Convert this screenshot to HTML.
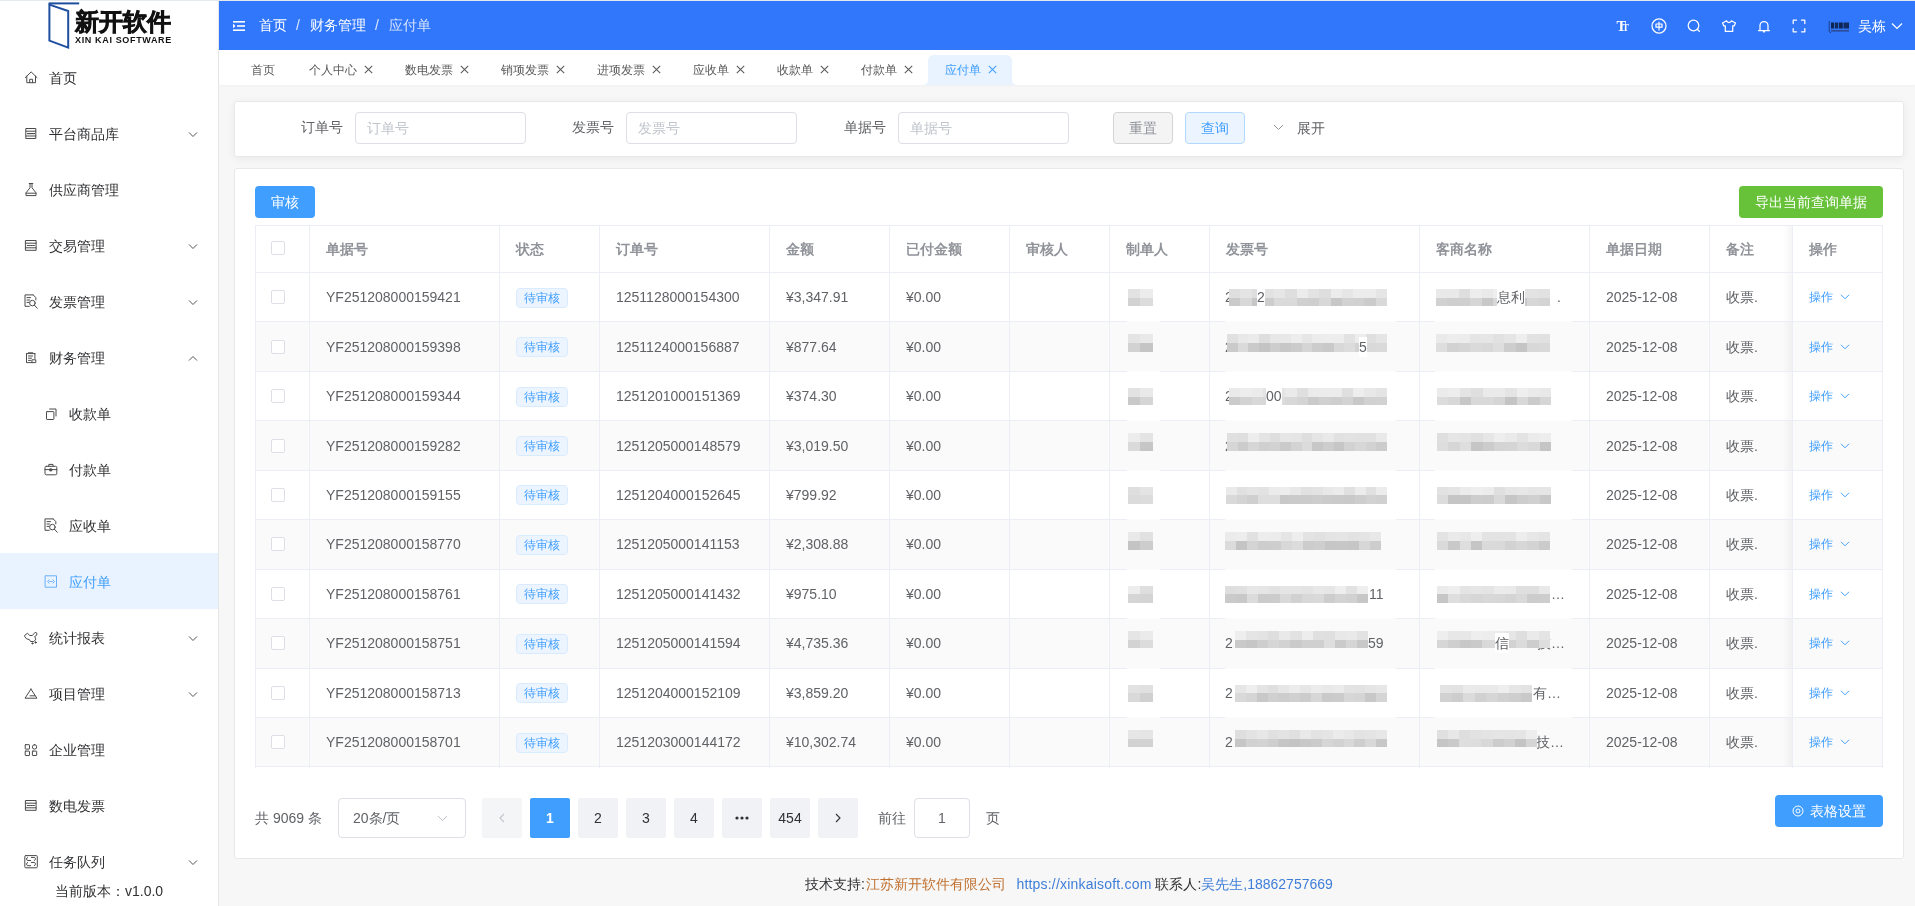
<!DOCTYPE html>
<html><head><meta charset="utf-8"><style>
*{box-sizing:border-box;margin:0;padding:0}
html,body{width:1915px;height:906px;overflow:hidden;background:#f7f7f7;font-family:"Liberation Sans",sans-serif;color:#303133}
.a{position:absolute}
.nw{white-space:nowrap}
#topline{left:0;top:0;width:1915px;height:1px;background:#e4e9ee}
#side{left:0;top:1px;width:219px;height:905px;background:#fff;border-right:1px solid #e6e6e6}
#hdr{left:219px;top:1px;width:1696px;height:49px;background:#3177fb;color:#fff}
#tabs{left:219px;top:50px;width:1696px;height:35px;background:#fff;box-shadow:0 1px 2px rgba(0,0,0,.03)}
.card{background:#fff;border:1px solid #e8e8e8;border-radius:3px}
#search{left:234px;top:101px;width:1670px;height:56px;box-shadow:0 2px 10px rgba(0,0,0,.06)}
#tcard{left:234px;top:168px;width:1670px;height:691px}
.mi{position:absolute;left:0;width:218px;height:56px;font-size:14px;color:#303133;line-height:56px}
.mi .t{position:absolute;left:48.5px;top:1px}
.mi.sub .t{left:68.5px}
.mi svg{position:absolute}
.chev{position:absolute;left:188px;top:25.5px}
.bc{position:absolute;top:0;line-height:49px;font-size:14px;color:#fff}
.tab{position:absolute;top:55px;height:30px;line-height:30px;font-size:12px;color:#555}
.lbl{position:absolute;font-size:14px;color:#606266;line-height:32px;top:111px}
.inp{position:absolute;top:112px;width:171px;height:32px;border:1px solid #dcdfe6;border-radius:4px;font-size:14px;color:#c0c4cc;line-height:30px;padding-left:11px}
.btn{position:absolute;border-radius:4px;font-size:14px;text-align:center;font-weight:500}
.th{position:absolute;font-size:14px;font-weight:bold;color:#909399;line-height:20px}
.td{position:absolute;font-size:14px;color:#606266;line-height:20px;white-space:nowrap}
.hl{position:absolute;height:1px;background:#ebeef5}
.vl{position:absolute;width:1px;background:#ebeef5}
.cb{position:absolute;width:14px;height:14px;border:1px solid #dcdfe6;border-radius:2px;background:#fff}
.tag{position:absolute;height:20px;width:52px;border:1px solid #d9ecff;background:#ecf5ff;color:#409eff;border-radius:4px;font-size:12px;line-height:18px;text-align:center}
.op{position:absolute;font-size:12px;color:#409eff;line-height:20px}
.pg{position:absolute;top:798px;width:40px;height:40px;background:#f0f2f5;border-radius:2px;font-size:14px;color:#303133;text-align:center;line-height:40px;font-weight:normal}
.mz{position:absolute}
.mz i{position:absolute;display:block}
#foot{position:absolute;left:805px;top:874px;font-size:14px;line-height:20px;color:#303133;white-space:nowrap}
</style></head><body><div id="root" style="position:absolute;left:0;top:0;width:1915px;height:906px;will-change:transform">
<div id="topline" class="a"></div>
<div id="side" class="a"></div>
<svg class="a" style="left:46px;top:1px" width="36" height="49" viewBox="46 1 36 49" fill="none" stroke="#1e4f9f" stroke-width="2"><path d="M48.6 3.4H79.2"/><path d="M49.4 3.6V40.6L68.2 47.6V11L49.4 4.6"/></svg>
<div class="a nw" style="left:74.5px;top:6.5px;font-size:24px;line-height:30px;font-weight:900;color:#111;letter-spacing:0.2px;-webkit-text-stroke:0.7px #111">新开软件</div>
<div class="a nw" style="left:75px;top:34.5px;font-size:9px;line-height:11px;font-weight:bold;color:#111;letter-spacing:0.65px">XIN KAI SOFTWARE</div>
<div class="mi" style="top:49px;color:#303133">
<svg class="a" style="left:24px;top:20px;color:#4a4a4a" width="16" height="16" viewBox="0 0 16 16" fill="none" stroke="#4a4a4a" stroke-width="1" stroke-linecap="round" stroke-linejoin="round"><path d="M1.3 8.6L7.15 2.9L13 8.6M2.8 7.2V13.7H11.5V7.2M5.7 13.7V10.3H8.6V13.7"/></svg>
<span class="t">首页</span>
</div>
<div class="mi" style="top:105px;color:#303133">
<svg class="a" style="left:24px;top:20px;color:#4a4a4a" width="16" height="16" viewBox="0 0 16 16" fill="none" stroke="#4a4a4a" stroke-width="1" stroke-linecap="round" stroke-linejoin="round"><rect x="2.2" y="3.5" width="9.6" height="10"/><path d="M2.2 6.2H11.8M2.2 11H11.8M3.5 8.6H10.5" /><path d="M3.5 8.6H10.5" stroke-dasharray="1.2 0.8"/></svg>
<span class="t">平台商品库</span>
<svg class="chev" width="10" height="7" viewBox="0 0 10 7" fill="none" stroke="#555" stroke-width="1"><path d="M1 1.5L5 5.5L9 1.5"/></svg>
</div>
<div class="mi" style="top:161px;color:#303133">
<svg class="a" style="left:24px;top:20px;color:#4a4a4a" width="16" height="16" viewBox="0 0 16 16" fill="none" stroke="#4a4a4a" stroke-width="1" stroke-linecap="round" stroke-linejoin="round"><path d="M5.2 2.5H8.8M6 2.5V6.8L2 11.8V14.6H12V11.8L8 6.8V2.5M2 12.2H12"/></svg>
<span class="t">供应商管理</span>
</div>
<div class="mi" style="top:217px;color:#303133">
<svg class="a" style="left:24px;top:20px;color:#4a4a4a" width="16" height="16" viewBox="0 0 16 16" fill="none" stroke="#4a4a4a" stroke-width="1" stroke-linecap="round" stroke-linejoin="round"><rect x="1.8" y="3.5" width="10.3" height="9.8"/><path d="M1.8 6.2H12.1M1.8 10.8H12.1"/><path d="M3.2 8.5H10.7" stroke-dasharray="1.2 0.8"/></svg>
<span class="t">交易管理</span>
<svg class="chev" width="10" height="7" viewBox="0 0 10 7" fill="none" stroke="#555" stroke-width="1"><path d="M1 1.5L5 5.5L9 1.5"/></svg>
</div>
<div class="mi" style="top:273px;color:#303133">
<svg class="a" style="left:24px;top:20px;color:#4a4a4a" width="16" height="16" viewBox="0 0 16 16" fill="none" stroke="#4a4a4a" stroke-width="1" stroke-linecap="round" stroke-linejoin="round"><path d="M9.2 1.9H1V13.3H5.3M9.2 1.9L11.8 4.6V6.8M3 4.6H6.5M3 7H5.5M3 9.4H4.8"/><circle cx="8.4" cy="10.1" r="2.8"/><path d="M10.4 12.2L13.3 15.3"/></svg>
<span class="t">发票管理</span>
<svg class="chev" width="10" height="7" viewBox="0 0 10 7" fill="none" stroke="#555" stroke-width="1"><path d="M1 1.5L5 5.5L9 1.5"/></svg>
</div>
<div class="mi" style="top:329px;color:#303133">
<svg class="a" style="left:24px;top:20px;color:#4a4a4a" width="16" height="16" viewBox="0 0 16 16" fill="none" stroke="#4a4a4a" stroke-width="1" stroke-linecap="round" stroke-linejoin="round"><path d="M4.3 3.8H8.7M2.5 4.6V13.6H8M10.9 4.6V9.5M2.5 4.6H10.9M4.5 7H8.5M4.5 9.2H7.5M4.5 11.4H6.5"/><rect x="8.3" y="10.8" width="3.5" height="2.8"/></svg>
<span class="t">财务管理</span>
<svg class="chev" width="10" height="7" viewBox="0 0 10 7" fill="none" stroke="#555" stroke-width="1"><path d="M1 5.5L5 1.5L9 5.5"/></svg>
</div>
<div class="mi sub" style="top:385px;color:#303133">
<svg class="a" style="left:44px;top:20px;color:#4a4a4a" width="16" height="16" viewBox="0 0 16 16" fill="none" stroke="#4a4a4a" stroke-width="1" stroke-linecap="round" stroke-linejoin="round"><rect x="2.5" y="6.6" width="7.4" height="7.9" rx="0.6"/><path d="M5.6 4H12V11"/></svg>
<span class="t">收款单</span>
</div>
<div class="mi sub" style="top:441px;color:#303133">
<svg class="a" style="left:44px;top:20px;color:#4a4a4a" width="16" height="16" viewBox="0 0 16 16" fill="none" stroke="#4a4a4a" stroke-width="1" stroke-linecap="round" stroke-linejoin="round"><rect x="1" y="5.3" width="11.8" height="8.5" rx="1.3"/><path d="M4.8 5.3V3.4H9V5.3M1 8.6H12.8"/><rect x="6.1" y="7.9" width="1.6" height="2" fill="currentColor"/></svg>
<span class="t">付款单</span>
</div>
<div class="mi sub" style="top:497px;color:#303133">
<svg class="a" style="left:44px;top:20px;color:#4a4a4a" width="16" height="16" viewBox="0 0 16 16" fill="none" stroke="#4a4a4a" stroke-width="1" stroke-linecap="round" stroke-linejoin="round"><path d="M9.2 1.9H1V13.3H5.3M9.2 1.9L11.8 4.6V6.8M3 4.6H6.5M3 7H5.5M3 9.4H4.8"/><circle cx="8.4" cy="10.1" r="2.8"/><path d="M10.4 12.2L13.3 15.3"/></svg>
<span class="t">应收单</span>
</div>
<div class="mi sub" style="top:553px;background:#e8f3ff;color:#409eff">
<svg class="a" style="left:44px;top:20px;color:#6aaef6" width="16" height="16" viewBox="0 0 16 16" fill="none" stroke="#6aaef6" stroke-width="1" stroke-linecap="round" stroke-linejoin="round"><rect x="1.5" y="2.8" width="11" height="11.4"/><path d="M5 6.9L3.6 8.5L5 10.1M9 6.9L10.4 8.5L9 10.1"/><path d="M5.6 8.5H8.4" stroke-dasharray="0.9 0.8"/></svg>
<span class="t">应付单</span>
</div>
<div class="mi" style="top:609px;color:#303133">
<svg class="a" style="left:24px;top:20px;color:#4a4a4a" width="16" height="16" viewBox="0 0 16 16" fill="none" stroke="#4a4a4a" stroke-width="1" stroke-linecap="round" stroke-linejoin="round"><path d="M0.6 6.5L3.4 4.3L4.5 5.1L5.6 6.5H8.4L9.8 4.8L11.2 3.3L13 4.3L12.5 6.4L10.6 7.6L11.6 9.2L11.4 10.9L9.8 12.5H6.5L5.4 10.6L2.6 9.8L1.2 8.1Z"/><circle cx="8.4" cy="14.4" r="0.6" fill="currentColor"/><circle cx="11.6" cy="13.4" r="0.7" fill="currentColor"/></svg>
<span class="t">统计报表</span>
<svg class="chev" width="10" height="7" viewBox="0 0 10 7" fill="none" stroke="#555" stroke-width="1"><path d="M1 1.5L5 5.5L9 1.5"/></svg>
</div>
<div class="mi" style="top:665px;color:#303133">
<svg class="a" style="left:24px;top:20px;color:#4a4a4a" width="16" height="16" viewBox="0 0 16 16" fill="none" stroke="#4a4a4a" stroke-width="1" stroke-linecap="round" stroke-linejoin="round"><path d="M6.95 4.1L12.9 13.2H1L6.95 4.1Z"/><path d="M6 10.8H10.8"/></svg>
<span class="t">项目管理</span>
<svg class="chev" width="10" height="7" viewBox="0 0 10 7" fill="none" stroke="#555" stroke-width="1"><path d="M1 1.5L5 5.5L9 1.5"/></svg>
</div>
<div class="mi" style="top:721px;color:#303133">
<svg class="a" style="left:24px;top:20px;color:#4a4a4a" width="16" height="16" viewBox="0 0 16 16" fill="none" stroke="#4a4a4a" stroke-width="1" stroke-linecap="round" stroke-linejoin="round"><rect x="1.2" y="3.7" width="4.3" height="4.4" rx="0.5"/><rect x="8.4" y="3.7" width="4.3" height="4.4" rx="2.1"/><rect x="1.2" y="10.1" width="4.3" height="4.4" rx="0.5"/><rect x="8.4" y="10.1" width="4.3" height="4.4" rx="0.5"/></svg>
<span class="t">企业管理</span>
</div>
<div class="mi" style="top:777px;color:#303133">
<svg class="a" style="left:24px;top:20px;color:#4a4a4a" width="16" height="16" viewBox="0 0 16 16" fill="none" stroke="#4a4a4a" stroke-width="1" stroke-linecap="round" stroke-linejoin="round"><rect x="1.8" y="3.5" width="10.3" height="9.8"/><path d="M1.8 6.2H12.1M1.8 10.8H12.1"/><path d="M3.2 8.5H10.7" stroke-dasharray="1.2 0.8"/></svg>
<span class="t">数电发票</span>
</div>
<div class="mi" style="top:833px;color:#303133">
<svg class="a" style="left:24px;top:20px;color:#4a4a4a" width="16" height="16" viewBox="0 0 16 16" fill="none" stroke="#4a4a4a" stroke-width="1" stroke-linecap="round" stroke-linejoin="round"><rect x="0.8" y="2.6" width="12.5" height="12.2" rx="1"/><path d="M3.45 4.3C2.2 4.8 2.2 7.3 3.7 7.5H6.6M7.4 4.45H10.3C11.9 4.6 11.9 7.2 10.3 7.5M3.45 9.4C2.2 9.9 2.2 12.5 3.7 12.7H6.6M7.4 9.45H10.3C11.9 9.6 11.9 12.4 10.3 12.7"/></svg>
<span class="t">任务队列</span>
<svg class="chev" width="10" height="7" viewBox="0 0 10 7" fill="none" stroke="#555" stroke-width="1"><path d="M1 1.5L5 5.5L9 1.5"/></svg>
</div>
<div class="a nw" style="left:55px;top:881px;font-size:14px;line-height:20px;color:#303133">当前版本：v1.0.0</div>
<div id="hdr" class="a">
<svg class="a" style="left:14px;top:19px" width="12" height="12" viewBox="0 0 12 12" fill="#fff"><rect x="0" y="1" width="12" height="1.6"/><rect x="4" y="5.2" width="8" height="1.6"/><rect x="0" y="9.4" width="12" height="1.6"/><path d="M0 3.8L2.6 6L0 8.2Z"/></svg>
<span class="bc" style="left:40px">首页</span>
<span class="bc" style="left:77px;color:#dfe9fe">/</span>
<span class="bc" style="left:91px">财务管理</span>
<span class="bc" style="left:156px;color:#dfe9fe">/</span>
<span class="bc" style="left:170px;color:#d6e3fd">应付单</span>
</div>
<svg class="a" style="left:1615px;top:18px" width="16" height="16" viewBox="0 0 16 16" fill="#fff" font-family="Liberation Serif" font-weight="bold"><text x="1.6" y="13.4" font-size="14.5">T</text><text x="7.6" y="13.4" font-size="9.5">T</text></svg>
<svg class="a" style="left:1651px;top:18px" width="16" height="16" viewBox="0 0 16 16" fill="none" stroke="#fff" stroke-width="1.25" stroke-linecap="round" stroke-linejoin="round" ><circle cx="8" cy="8" r="7"/><rect x="5" y="6" width="6" height="3.2" stroke-width="1.2"/><path d="M8 4V12" stroke-width="1.2"/></svg>
<svg class="a" style="left:1686px;top:18px" width="16" height="16" viewBox="0 0 16 16" fill="none" stroke="#fff" stroke-width="1.25" stroke-linecap="round" stroke-linejoin="round" ><circle cx="7.5" cy="7.5" r="5.3"/><path d="M11.3 11.3L13.3 13.3"/></svg>
<svg class="a" style="left:1721px;top:19px" width="16" height="14" viewBox="0 0 16 14" fill="none" stroke="#fff" stroke-width="1.25" stroke-linecap="round" stroke-linejoin="round" ><path d="M5.6 1.8L1.5 4L2.9 6.9H4.3V12.4H11.7V6.9H13.1L14.5 4L10.4 1.8C10 2.9 9 3.5 8 3.5C7 3.5 6 2.9 5.6 1.8Z"/></svg>
<svg class="a" style="left:1757px;top:19px" width="14" height="14" viewBox="0 0 14 14" fill="none" stroke="#fff" stroke-width="1.25" stroke-linecap="round" stroke-linejoin="round" ><path d="M3 11V6.5A4 4 0 0 1 11 6.5V11M1.5 11.5H12.5M6.5 12.8H7.5"/></svg>
<svg class="a" style="left:1792px;top:19px" width="14" height="14" viewBox="0 0 14 14" fill="none" stroke="#fff" stroke-width="1.25" stroke-linecap="round" stroke-linejoin="round" ><path d="M1.2 4.5V1.2H4.5M9.5 1.2H12.8V4.5M12.8 9.5V12.8H9.5M4.5 12.8H1.2V9.5"/></svg>
<svg class="a" style="left:1828px;top:20px" width="23" height="14" viewBox="0 0 23 14"><path d="M1.2 1V11.5L3 13" fill="none" stroke="#1c3f88" stroke-width="1"/><rect x="3" y="2.5" width="3" height="6" fill="#0f2450"/><rect x="6.8" y="2.5" width="3.2" height="6" fill="#102a5c"/><rect x="10.8" y="2.5" width="4" height="6" fill="#0f2450"/><rect x="15.5" y="2.5" width="5.5" height="6" fill="#132c60"/><rect x="3" y="10" width="18" height="1.6" fill="#2a4d95"/></svg>
<span class="a nw" style="left:1858px;top:16px;font-size:14px;line-height:20px;color:#fff">吴栋</span>
<svg class="a" style="left:1891px;top:22px" width="12" height="8" viewBox="0 0 12 8" fill="none" stroke="#fff" stroke-width="1.2"><path d="M1 1.5L6 6.5L11 1.5"/></svg>
<div id="tabs" class="a"></div>
<svg class="a" style="left:922px;top:55px" width="96" height="30" viewBox="0 0 96 30"><path d="M0 30C4 30 6 28 6 24V6C6 2.5 8.5 0 12 0H84C87.5 0 90 2.5 90 6V24C90 28 92 30 96 30Z" fill="#e8f3ff"/></svg>
<span class="tab nw" style="left:251px;color:#595959">首页</span>
<span class="tab nw" style="left:309px;color:#595959">个人中心</span>
<svg class="a" style="left:364px;top:65px" width="9" height="9" viewBox="0 0 9 9" fill="none" stroke="#595959" stroke-width="1.05"><path d="M0.8 0.8L8.2 8.2M8.2 0.8L0.8 8.2"/></svg>
<span class="tab nw" style="left:405px;color:#595959">数电发票</span>
<svg class="a" style="left:460px;top:65px" width="9" height="9" viewBox="0 0 9 9" fill="none" stroke="#595959" stroke-width="1.05"><path d="M0.8 0.8L8.2 8.2M8.2 0.8L0.8 8.2"/></svg>
<span class="tab nw" style="left:501px;color:#595959">销项发票</span>
<svg class="a" style="left:556px;top:65px" width="9" height="9" viewBox="0 0 9 9" fill="none" stroke="#595959" stroke-width="1.05"><path d="M0.8 0.8L8.2 8.2M8.2 0.8L0.8 8.2"/></svg>
<span class="tab nw" style="left:597px;color:#595959">进项发票</span>
<svg class="a" style="left:652px;top:65px" width="9" height="9" viewBox="0 0 9 9" fill="none" stroke="#595959" stroke-width="1.05"><path d="M0.8 0.8L8.2 8.2M8.2 0.8L0.8 8.2"/></svg>
<span class="tab nw" style="left:693px;color:#595959">应收单</span>
<svg class="a" style="left:736px;top:65px" width="9" height="9" viewBox="0 0 9 9" fill="none" stroke="#595959" stroke-width="1.05"><path d="M0.8 0.8L8.2 8.2M8.2 0.8L0.8 8.2"/></svg>
<span class="tab nw" style="left:777px;color:#595959">收款单</span>
<svg class="a" style="left:820px;top:65px" width="9" height="9" viewBox="0 0 9 9" fill="none" stroke="#595959" stroke-width="1.05"><path d="M0.8 0.8L8.2 8.2M8.2 0.8L0.8 8.2"/></svg>
<span class="tab nw" style="left:861px;color:#595959">付款单</span>
<svg class="a" style="left:904px;top:65px" width="9" height="9" viewBox="0 0 9 9" fill="none" stroke="#595959" stroke-width="1.05"><path d="M0.8 0.8L8.2 8.2M8.2 0.8L0.8 8.2"/></svg>
<span class="tab nw" style="left:945px;color:#409eff">应付单</span>
<svg class="a" style="left:988px;top:65px" width="9" height="9" viewBox="0 0 9 9" fill="none" stroke="#409eff" stroke-width="1.05"><path d="M0.8 0.8L8.2 8.2M8.2 0.8L0.8 8.2"/></svg>
<div id="search" class="a card"></div>
<span class="lbl nw" style="left:301px">订单号</span>
<div class="inp nw" style="left:355px">订单号</div>
<span class="lbl nw" style="left:572px">发票号</span>
<div class="inp nw" style="left:626px">发票号</div>
<span class="lbl nw" style="left:844px">单据号</span>
<div class="inp nw" style="left:898px">单据号</div>
<div class="btn nw" style="left:1113px;top:112px;width:60px;height:32px;line-height:30px;background:#f4f4f5;border:1px solid #d3d4d6;color:#909399">重置</div>
<div class="btn nw" style="left:1185px;top:112px;width:60px;height:32px;line-height:30px;background:#ecf5ff;border:1px solid #b3d8ff;color:#409eff">查询</div>
<svg class="a" style="left:1273px;top:124px" width="11" height="7" viewBox="0 0 11 7" fill="none" stroke="#909399" stroke-width="1"><path d="M1 1L5.5 5.5L10 1"/></svg>
<span class="a nw" style="left:1297px;top:118px;font-size:14px;line-height:20px;color:#606266">展开</span>
<div id="tcard" class="a card"></div>
<div class="btn nw" style="left:255px;top:186px;width:60px;height:32px;line-height:32px;background:#409eff;color:#fff">审核</div>
<div class="btn nw" style="left:1739px;top:186px;width:144px;height:32px;line-height:32px;background:#67c23a;color:#fff">导出当前查询单据</div>
<div class="a" style="left:255.5px;top:321.94px;width:1627.0px;height:49.44px;background:#fafafa"></div>
<div class="a" style="left:255.5px;top:420.82px;width:1627.0px;height:49.44px;background:#fafafa"></div>
<div class="a" style="left:255.5px;top:519.7px;width:1627.0px;height:49.44px;background:#fafafa"></div>
<div class="a" style="left:255.5px;top:618.5799999999999px;width:1627.0px;height:49.44px;background:#fafafa"></div>
<div class="a" style="left:255.5px;top:717.46px;width:1627.0px;height:49.44px;background:#fafafa"></div>
<div class="a" style="left:1782.5px;top:225.5px;width:10px;height:541.5px;background:linear-gradient(to right,rgba(0,0,0,0),rgba(0,0,0,.045))"></div>
<div class="hl" style="left:255.0px;top:225.00px;width:1628.0px"></div>
<div class="hl" style="left:255.0px;top:272.00px;width:1628.0px"></div>
<div class="hl" style="left:255.0px;top:321.44px;width:1628.0px"></div>
<div class="hl" style="left:255.0px;top:370.88px;width:1628.0px"></div>
<div class="hl" style="left:255.0px;top:420.32px;width:1628.0px"></div>
<div class="hl" style="left:255.0px;top:469.76px;width:1628.0px"></div>
<div class="hl" style="left:255.0px;top:519.20px;width:1628.0px"></div>
<div class="hl" style="left:255.0px;top:568.64px;width:1628.0px"></div>
<div class="hl" style="left:255.0px;top:618.08px;width:1628.0px"></div>
<div class="hl" style="left:255.0px;top:667.52px;width:1628.0px"></div>
<div class="hl" style="left:255.0px;top:716.96px;width:1628.0px"></div>
<div class="hl" style="left:255.0px;top:766.40px;width:1628.0px"></div>
<div class="a" style="left:1127px;top:321.44px;width:33px;height:1px;background:#fcfcfc"></div>
<div class="a" style="left:1225px;top:321.44px;width:171px;height:1px;background:#fcfcfc"></div>
<div class="a" style="left:1435px;top:321.44px;width:137px;height:1px;background:#fcfcfc"></div>
<div class="a" style="left:1127px;top:370.88px;width:33px;height:1px;background:#fcfcfc"></div>
<div class="a" style="left:1225px;top:370.88px;width:171px;height:1px;background:#fcfcfc"></div>
<div class="a" style="left:1435px;top:370.88px;width:137px;height:1px;background:#fcfcfc"></div>
<div class="a" style="left:1127px;top:420.32px;width:33px;height:1px;background:#fcfcfc"></div>
<div class="a" style="left:1225px;top:420.32px;width:171px;height:1px;background:#fcfcfc"></div>
<div class="a" style="left:1435px;top:420.32px;width:137px;height:1px;background:#fcfcfc"></div>
<div class="a" style="left:1127px;top:469.76px;width:33px;height:1px;background:#fcfcfc"></div>
<div class="a" style="left:1225px;top:469.76px;width:171px;height:1px;background:#fcfcfc"></div>
<div class="a" style="left:1435px;top:469.76px;width:137px;height:1px;background:#fcfcfc"></div>
<div class="a" style="left:1127px;top:519.20px;width:33px;height:1px;background:#fcfcfc"></div>
<div class="a" style="left:1225px;top:519.20px;width:171px;height:1px;background:#fcfcfc"></div>
<div class="a" style="left:1435px;top:519.20px;width:137px;height:1px;background:#fcfcfc"></div>
<div class="a" style="left:1127px;top:568.64px;width:33px;height:1px;background:#fcfcfc"></div>
<div class="a" style="left:1225px;top:568.64px;width:171px;height:1px;background:#fcfcfc"></div>
<div class="a" style="left:1435px;top:568.64px;width:137px;height:1px;background:#fcfcfc"></div>
<div class="a" style="left:1127px;top:618.08px;width:33px;height:1px;background:#fcfcfc"></div>
<div class="a" style="left:1225px;top:618.08px;width:171px;height:1px;background:#fcfcfc"></div>
<div class="a" style="left:1435px;top:618.08px;width:137px;height:1px;background:#fcfcfc"></div>
<div class="a" style="left:1127px;top:667.52px;width:33px;height:1px;background:#fcfcfc"></div>
<div class="a" style="left:1225px;top:667.52px;width:171px;height:1px;background:#fcfcfc"></div>
<div class="a" style="left:1435px;top:667.52px;width:137px;height:1px;background:#fcfcfc"></div>
<div class="a" style="left:1127px;top:716.96px;width:33px;height:1px;background:#fcfcfc"></div>
<div class="a" style="left:1225px;top:716.96px;width:171px;height:1px;background:#fcfcfc"></div>
<div class="a" style="left:1435px;top:716.96px;width:137px;height:1px;background:#fcfcfc"></div>
<div class="vl" style="left:255.0px;top:225.0px;height:542.5px"></div>
<div class="vl" style="left:309.0px;top:225.0px;height:542.5px"></div>
<div class="vl" style="left:499.0px;top:225.0px;height:542.5px"></div>
<div class="vl" style="left:599.0px;top:225.0px;height:542.5px"></div>
<div class="vl" style="left:769.0px;top:225.0px;height:542.5px"></div>
<div class="vl" style="left:889.0px;top:225.0px;height:542.5px"></div>
<div class="vl" style="left:1009.0px;top:225.0px;height:542.5px"></div>
<div class="vl" style="left:1109.0px;top:225.0px;height:542.5px"></div>
<div class="vl" style="left:1209.0px;top:225.0px;height:542.5px"></div>
<div class="vl" style="left:1419.0px;top:225.0px;height:542.5px"></div>
<div class="vl" style="left:1589.0px;top:225.0px;height:542.5px"></div>
<div class="vl" style="left:1709.0px;top:225.0px;height:542.5px"></div>
<div class="vl" style="left:1792.0px;top:225.0px;height:542.5px"></div>
<div class="vl" style="left:1882.0px;top:225.0px;height:542.5px"></div>
<div class="cb" style="left:271px;top:241px"></div>
<span class="th nw" style="left:326.0px;top:238.5px">单据号</span>
<span class="th nw" style="left:516.0px;top:238.5px">状态</span>
<span class="th nw" style="left:616.0px;top:238.5px">订单号</span>
<span class="th nw" style="left:786.0px;top:238.5px">金额</span>
<span class="th nw" style="left:906.0px;top:238.5px">已付金额</span>
<span class="th nw" style="left:1026.0px;top:238.5px">审核人</span>
<span class="th nw" style="left:1126.0px;top:238.5px">制单人</span>
<span class="th nw" style="left:1226.0px;top:238.5px">发票号</span>
<span class="th nw" style="left:1436.0px;top:238.5px">客商名称</span>
<span class="th nw" style="left:1606.0px;top:238.5px">单据日期</span>
<span class="th nw" style="left:1726.0px;top:238.5px">备注</span>
<span class="th nw" style="left:1809.0px;top:238.5px">操作</span>
<div class="cb" style="left:271px;top:290.22px"></div>
<span class="td" style="left:326px;top:287.22px">YF251208000159421</span>
<div class="tag nw" style="left:516px;top:287.72px">待审核</div>
<span class="td" style="left:616px;top:287.22px">1251128000154300</span>
<span class="td" style="left:786px;top:287.22px">¥3,347.91</span>
<span class="td" style="left:906px;top:287.22px">¥0.00</span>
<span class="td" style="left:1225px;top:287.22px">2</span>
<span class="td" style="left:1557px;top:287.22px">.</span>
<div class="mz" style="left:1127.5px;top:289.02px;width:25.5px;height:17.4px"><i style="left:0.00px;top:0.0px;width:13.05px;height:8.7px;background:rgb(226,226,226)"></i><i style="left:12.75px;top:0.0px;width:13.05px;height:8.7px;background:rgb(236,236,236)"></i><i style="left:0.00px;top:8.7px;width:13.05px;height:8.7px;background:rgb(210,210,210)"></i><i style="left:12.75px;top:8.7px;width:13.05px;height:8.7px;background:rgb(220,220,220)"></i></div>
<div class="mz" style="left:1229px;top:289.02px;width:158px;height:17.4px"><i style="left:0.00px;top:0.0px;width:11.59px;height:8.7px;background:rgb(223,223,223)"></i><i style="left:11.29px;top:0.0px;width:11.59px;height:8.7px;background:rgb(228,228,228)"></i><i style="left:22.57px;top:0.0px;width:11.59px;height:8.7px;background:rgb(222,222,222)"></i><i style="left:33.86px;top:0.0px;width:11.59px;height:8.7px;background:rgb(226,226,226)"></i><i style="left:45.14px;top:0.0px;width:11.59px;height:8.7px;background:rgb(230,230,230)"></i><i style="left:56.43px;top:0.0px;width:11.59px;height:8.7px;background:rgb(222,222,222)"></i><i style="left:67.71px;top:0.0px;width:11.59px;height:8.7px;background:rgb(236,236,236)"></i><i style="left:79.00px;top:0.0px;width:11.59px;height:8.7px;background:rgb(227,227,227)"></i><i style="left:90.29px;top:0.0px;width:11.59px;height:8.7px;background:rgb(222,222,222)"></i><i style="left:101.57px;top:0.0px;width:11.59px;height:8.7px;background:rgb(236,236,236)"></i><i style="left:112.86px;top:0.0px;width:11.59px;height:8.7px;background:rgb(230,230,230)"></i><i style="left:124.14px;top:0.0px;width:11.59px;height:8.7px;background:rgb(236,236,236)"></i><i style="left:135.43px;top:0.0px;width:11.59px;height:8.7px;background:rgb(236,236,236)"></i><i style="left:146.71px;top:0.0px;width:11.59px;height:8.7px;background:rgb(229,229,229)"></i><i style="left:0.00px;top:8.7px;width:11.59px;height:8.7px;background:rgb(202,202,202)"></i><i style="left:11.29px;top:8.7px;width:11.59px;height:8.7px;background:rgb(216,216,216)"></i><i style="left:22.57px;top:8.7px;width:11.59px;height:8.7px;background:rgb(199,199,199)"></i><i style="left:33.86px;top:8.7px;width:11.59px;height:8.7px;background:rgb(205,205,205)"></i><i style="left:45.14px;top:8.7px;width:11.59px;height:8.7px;background:rgb(218,218,218)"></i><i style="left:56.43px;top:8.7px;width:11.59px;height:8.7px;background:rgb(218,218,218)"></i><i style="left:67.71px;top:8.7px;width:11.59px;height:8.7px;background:rgb(208,208,208)"></i><i style="left:79.00px;top:8.7px;width:11.59px;height:8.7px;background:rgb(207,207,207)"></i><i style="left:90.29px;top:8.7px;width:11.59px;height:8.7px;background:rgb(216,216,216)"></i><i style="left:101.57px;top:8.7px;width:11.59px;height:8.7px;background:rgb(199,199,199)"></i><i style="left:112.86px;top:8.7px;width:11.59px;height:8.7px;background:rgb(210,210,210)"></i><i style="left:124.14px;top:8.7px;width:11.59px;height:8.7px;background:rgb(209,209,209)"></i><i style="left:135.43px;top:8.7px;width:11.59px;height:8.7px;background:rgb(203,203,203)"></i><i style="left:146.71px;top:8.7px;width:11.59px;height:8.7px;background:rgb(217,217,217)"></i></div>
<div class="mz" style="left:1436px;top:289.02px;width:114px;height:17.4px"><i style="left:0.00px;top:0.0px;width:11.70px;height:8.7px;background:rgb(233,233,233)"></i><i style="left:11.40px;top:0.0px;width:11.70px;height:8.7px;background:rgb(233,233,233)"></i><i style="left:22.80px;top:0.0px;width:11.70px;height:8.7px;background:rgb(222,222,222)"></i><i style="left:34.20px;top:0.0px;width:11.70px;height:8.7px;background:rgb(237,237,237)"></i><i style="left:45.60px;top:0.0px;width:11.70px;height:8.7px;background:rgb(233,233,233)"></i><i style="left:57.00px;top:0.0px;width:11.70px;height:8.7px;background:rgb(238,238,238)"></i><i style="left:68.40px;top:0.0px;width:11.70px;height:8.7px;background:rgb(235,235,235)"></i><i style="left:79.80px;top:0.0px;width:11.70px;height:8.7px;background:rgb(227,227,227)"></i><i style="left:91.20px;top:0.0px;width:11.70px;height:8.7px;background:rgb(227,227,227)"></i><i style="left:102.60px;top:0.0px;width:11.70px;height:8.7px;background:rgb(225,225,225)"></i><i style="left:0.00px;top:8.7px;width:11.70px;height:8.7px;background:rgb(209,209,209)"></i><i style="left:11.40px;top:8.7px;width:11.70px;height:8.7px;background:rgb(206,206,206)"></i><i style="left:22.80px;top:8.7px;width:11.70px;height:8.7px;background:rgb(207,207,207)"></i><i style="left:34.20px;top:8.7px;width:11.70px;height:8.7px;background:rgb(214,214,214)"></i><i style="left:45.60px;top:8.7px;width:11.70px;height:8.7px;background:rgb(200,200,200)"></i><i style="left:57.00px;top:8.7px;width:11.70px;height:8.7px;background:rgb(216,216,216)"></i><i style="left:68.40px;top:8.7px;width:11.70px;height:8.7px;background:rgb(203,203,203)"></i><i style="left:79.80px;top:8.7px;width:11.70px;height:8.7px;background:rgb(199,199,199)"></i><i style="left:91.20px;top:8.7px;width:11.70px;height:8.7px;background:rgb(215,215,215)"></i><i style="left:102.60px;top:8.7px;width:11.70px;height:8.7px;background:rgb(212,212,212)"></i></div>
<span class="td" style="left:1257px;top:287.22px;background:#fff">2</span>
<span class="td" style="left:1497px;top:287.22px;background:#fff">息利</span>
<span class="td" style="left:1606px;top:287.22px">2025-12-08</span>
<span class="td" style="left:1726px;top:287.22px">收票.</span>
<span class="op nw" style="left:1809px;top:287.22px">操作</span>
<svg class="a" style="left:1840px;top:294.22px" width="10" height="6" viewBox="0 0 10 6" fill="none" stroke="#409eff" stroke-width="1"><path d="M1 0.8L5 4.8L9 0.8"/></svg>
<div class="cb" style="left:271px;top:339.66px"></div>
<span class="td" style="left:326px;top:336.66px">YF251208000159398</span>
<div class="tag nw" style="left:516px;top:337.16px">待审核</div>
<span class="td" style="left:616px;top:336.66px">1251124000156887</span>
<span class="td" style="left:786px;top:336.66px">¥877.64</span>
<span class="td" style="left:906px;top:336.66px">¥0.00</span>
<span class="td" style="left:1225px;top:336.66px">2</span>
<div class="mz" style="left:1127.5px;top:334.46px;width:25.5px;height:17.4px"><i style="left:0.00px;top:0.0px;width:13.05px;height:8.7px;background:rgb(228,228,228)"></i><i style="left:12.75px;top:0.0px;width:13.05px;height:8.7px;background:rgb(233,233,233)"></i><i style="left:0.00px;top:8.7px;width:13.05px;height:8.7px;background:rgb(210,210,210)"></i><i style="left:12.75px;top:8.7px;width:13.05px;height:8.7px;background:rgb(197,197,197)"></i></div>
<div class="mz" style="left:1227px;top:334.46px;width:160px;height:17.4px"><i style="left:0.00px;top:0.0px;width:10.97px;height:8.7px;background:rgb(224,224,224)"></i><i style="left:10.67px;top:0.0px;width:10.97px;height:8.7px;background:rgb(232,232,232)"></i><i style="left:21.33px;top:0.0px;width:10.97px;height:8.7px;background:rgb(235,235,235)"></i><i style="left:32.00px;top:0.0px;width:10.97px;height:8.7px;background:rgb(222,222,222)"></i><i style="left:42.67px;top:0.0px;width:10.97px;height:8.7px;background:rgb(231,231,231)"></i><i style="left:53.33px;top:0.0px;width:10.97px;height:8.7px;background:rgb(232,232,232)"></i><i style="left:64.00px;top:0.0px;width:10.97px;height:8.7px;background:rgb(237,237,237)"></i><i style="left:74.67px;top:0.0px;width:10.97px;height:8.7px;background:rgb(230,230,230)"></i><i style="left:85.33px;top:0.0px;width:10.97px;height:8.7px;background:rgb(236,236,236)"></i><i style="left:96.00px;top:0.0px;width:10.97px;height:8.7px;background:rgb(237,237,237)"></i><i style="left:106.67px;top:0.0px;width:10.97px;height:8.7px;background:rgb(237,237,237)"></i><i style="left:117.33px;top:0.0px;width:10.97px;height:8.7px;background:rgb(226,226,226)"></i><i style="left:128.00px;top:0.0px;width:10.97px;height:8.7px;background:rgb(237,237,237)"></i><i style="left:138.67px;top:0.0px;width:10.97px;height:8.7px;background:rgb(223,223,223)"></i><i style="left:149.33px;top:0.0px;width:10.97px;height:8.7px;background:rgb(229,229,229)"></i><i style="left:0.00px;top:8.7px;width:10.97px;height:8.7px;background:rgb(202,202,202)"></i><i style="left:10.67px;top:8.7px;width:10.97px;height:8.7px;background:rgb(218,218,218)"></i><i style="left:21.33px;top:8.7px;width:10.97px;height:8.7px;background:rgb(202,202,202)"></i><i style="left:32.00px;top:8.7px;width:10.97px;height:8.7px;background:rgb(196,196,196)"></i><i style="left:42.67px;top:8.7px;width:10.97px;height:8.7px;background:rgb(205,205,205)"></i><i style="left:53.33px;top:8.7px;width:10.97px;height:8.7px;background:rgb(199,199,199)"></i><i style="left:64.00px;top:8.7px;width:10.97px;height:8.7px;background:rgb(203,203,203)"></i><i style="left:74.67px;top:8.7px;width:10.97px;height:8.7px;background:rgb(213,213,213)"></i><i style="left:85.33px;top:8.7px;width:10.97px;height:8.7px;background:rgb(204,204,204)"></i><i style="left:96.00px;top:8.7px;width:10.97px;height:8.7px;background:rgb(201,201,201)"></i><i style="left:106.67px;top:8.7px;width:10.97px;height:8.7px;background:rgb(216,216,216)"></i><i style="left:117.33px;top:8.7px;width:10.97px;height:8.7px;background:rgb(220,220,220)"></i><i style="left:128.00px;top:8.7px;width:10.97px;height:8.7px;background:rgb(211,211,211)"></i><i style="left:138.67px;top:8.7px;width:10.97px;height:8.7px;background:rgb(217,217,217)"></i><i style="left:149.33px;top:8.7px;width:10.97px;height:8.7px;background:rgb(218,218,218)"></i></div>
<div class="mz" style="left:1436px;top:334.46px;width:114px;height:17.4px"><i style="left:0.00px;top:0.0px;width:11.70px;height:8.7px;background:rgb(234,234,234)"></i><i style="left:11.40px;top:0.0px;width:11.70px;height:8.7px;background:rgb(237,237,237)"></i><i style="left:22.80px;top:0.0px;width:11.70px;height:8.7px;background:rgb(236,236,236)"></i><i style="left:34.20px;top:0.0px;width:11.70px;height:8.7px;background:rgb(229,229,229)"></i><i style="left:45.60px;top:0.0px;width:11.70px;height:8.7px;background:rgb(230,230,230)"></i><i style="left:57.00px;top:0.0px;width:11.70px;height:8.7px;background:rgb(225,225,225)"></i><i style="left:68.40px;top:0.0px;width:11.70px;height:8.7px;background:rgb(229,229,229)"></i><i style="left:79.80px;top:0.0px;width:11.70px;height:8.7px;background:rgb(238,238,238)"></i><i style="left:91.20px;top:0.0px;width:11.70px;height:8.7px;background:rgb(226,226,226)"></i><i style="left:102.60px;top:0.0px;width:11.70px;height:8.7px;background:rgb(225,225,225)"></i><i style="left:0.00px;top:8.7px;width:11.70px;height:8.7px;background:rgb(222,222,222)"></i><i style="left:11.40px;top:8.7px;width:11.70px;height:8.7px;background:rgb(210,210,210)"></i><i style="left:22.80px;top:8.7px;width:11.70px;height:8.7px;background:rgb(213,213,213)"></i><i style="left:34.20px;top:8.7px;width:11.70px;height:8.7px;background:rgb(218,218,218)"></i><i style="left:45.60px;top:8.7px;width:11.70px;height:8.7px;background:rgb(216,216,216)"></i><i style="left:57.00px;top:8.7px;width:11.70px;height:8.7px;background:rgb(222,222,222)"></i><i style="left:68.40px;top:8.7px;width:11.70px;height:8.7px;background:rgb(205,205,205)"></i><i style="left:79.80px;top:8.7px;width:11.70px;height:8.7px;background:rgb(197,197,197)"></i><i style="left:91.20px;top:8.7px;width:11.70px;height:8.7px;background:rgb(216,216,216)"></i><i style="left:102.60px;top:8.7px;width:11.70px;height:8.7px;background:rgb(217,217,217)"></i></div>
<span class="td" style="left:1359px;top:336.66px;background:#fff">5</span>
<span class="td" style="left:1606px;top:336.66px">2025-12-08</span>
<span class="td" style="left:1726px;top:336.66px">收票.</span>
<span class="op nw" style="left:1809px;top:336.66px">操作</span>
<svg class="a" style="left:1840px;top:343.66px" width="10" height="6" viewBox="0 0 10 6" fill="none" stroke="#409eff" stroke-width="1"><path d="M1 0.8L5 4.8L9 0.8"/></svg>
<div class="cb" style="left:271px;top:389.10px"></div>
<span class="td" style="left:326px;top:386.10px">YF251208000159344</span>
<div class="tag nw" style="left:516px;top:386.60px">待审核</div>
<span class="td" style="left:616px;top:386.10px">1251201000151369</span>
<span class="td" style="left:786px;top:386.10px">¥374.30</span>
<span class="td" style="left:906px;top:386.10px">¥0.00</span>
<span class="td" style="left:1225px;top:386.10px">2</span>
<div class="mz" style="left:1127.5px;top:387.9px;width:25.5px;height:17.4px"><i style="left:0.00px;top:0.0px;width:13.05px;height:8.7px;background:rgb(226,226,226)"></i><i style="left:12.75px;top:0.0px;width:13.05px;height:8.7px;background:rgb(233,233,233)"></i><i style="left:0.00px;top:8.7px;width:13.05px;height:8.7px;background:rgb(201,201,201)"></i><i style="left:12.75px;top:8.7px;width:13.05px;height:8.7px;background:rgb(213,213,213)"></i></div>
<div class="mz" style="left:1229px;top:387.9px;width:158px;height:17.4px"><i style="left:0.00px;top:0.0px;width:11.59px;height:8.7px;background:rgb(234,234,234)"></i><i style="left:11.29px;top:0.0px;width:11.59px;height:8.7px;background:rgb(237,237,237)"></i><i style="left:22.57px;top:0.0px;width:11.59px;height:8.7px;background:rgb(235,235,235)"></i><i style="left:33.86px;top:0.0px;width:11.59px;height:8.7px;background:rgb(228,228,228)"></i><i style="left:45.14px;top:0.0px;width:11.59px;height:8.7px;background:rgb(228,228,228)"></i><i style="left:56.43px;top:0.0px;width:11.59px;height:8.7px;background:rgb(234,234,234)"></i><i style="left:67.71px;top:0.0px;width:11.59px;height:8.7px;background:rgb(223,223,223)"></i><i style="left:79.00px;top:0.0px;width:11.59px;height:8.7px;background:rgb(235,235,235)"></i><i style="left:90.29px;top:0.0px;width:11.59px;height:8.7px;background:rgb(236,236,236)"></i><i style="left:101.57px;top:0.0px;width:11.59px;height:8.7px;background:rgb(236,236,236)"></i><i style="left:112.86px;top:0.0px;width:11.59px;height:8.7px;background:rgb(223,223,223)"></i><i style="left:124.14px;top:0.0px;width:11.59px;height:8.7px;background:rgb(238,238,238)"></i><i style="left:135.43px;top:0.0px;width:11.59px;height:8.7px;background:rgb(232,232,232)"></i><i style="left:146.71px;top:0.0px;width:11.59px;height:8.7px;background:rgb(228,228,228)"></i><i style="left:0.00px;top:8.7px;width:11.59px;height:8.7px;background:rgb(203,203,203)"></i><i style="left:11.29px;top:8.7px;width:11.59px;height:8.7px;background:rgb(211,211,211)"></i><i style="left:22.57px;top:8.7px;width:11.59px;height:8.7px;background:rgb(216,216,216)"></i><i style="left:33.86px;top:8.7px;width:11.59px;height:8.7px;background:rgb(215,215,215)"></i><i style="left:45.14px;top:8.7px;width:11.59px;height:8.7px;background:rgb(220,220,220)"></i><i style="left:56.43px;top:8.7px;width:11.59px;height:8.7px;background:rgb(216,216,216)"></i><i style="left:67.71px;top:8.7px;width:11.59px;height:8.7px;background:rgb(212,212,212)"></i><i style="left:79.00px;top:8.7px;width:11.59px;height:8.7px;background:rgb(202,202,202)"></i><i style="left:90.29px;top:8.7px;width:11.59px;height:8.7px;background:rgb(208,208,208)"></i><i style="left:101.57px;top:8.7px;width:11.59px;height:8.7px;background:rgb(206,206,206)"></i><i style="left:112.86px;top:8.7px;width:11.59px;height:8.7px;background:rgb(211,211,211)"></i><i style="left:124.14px;top:8.7px;width:11.59px;height:8.7px;background:rgb(200,200,200)"></i><i style="left:135.43px;top:8.7px;width:11.59px;height:8.7px;background:rgb(209,209,209)"></i><i style="left:146.71px;top:8.7px;width:11.59px;height:8.7px;background:rgb(210,210,210)"></i></div>
<div class="mz" style="left:1437px;top:387.9px;width:114px;height:17.4px"><i style="left:0.00px;top:0.0px;width:11.70px;height:8.7px;background:rgb(235,235,235)"></i><i style="left:11.40px;top:0.0px;width:11.70px;height:8.7px;background:rgb(237,237,237)"></i><i style="left:22.80px;top:0.0px;width:11.70px;height:8.7px;background:rgb(228,228,228)"></i><i style="left:34.20px;top:0.0px;width:11.70px;height:8.7px;background:rgb(223,223,223)"></i><i style="left:45.60px;top:0.0px;width:11.70px;height:8.7px;background:rgb(234,234,234)"></i><i style="left:57.00px;top:0.0px;width:11.70px;height:8.7px;background:rgb(234,234,234)"></i><i style="left:68.40px;top:0.0px;width:11.70px;height:8.7px;background:rgb(228,228,228)"></i><i style="left:79.80px;top:0.0px;width:11.70px;height:8.7px;background:rgb(238,238,238)"></i><i style="left:91.20px;top:0.0px;width:11.70px;height:8.7px;background:rgb(234,234,234)"></i><i style="left:102.60px;top:0.0px;width:11.70px;height:8.7px;background:rgb(232,232,232)"></i><i style="left:0.00px;top:8.7px;width:11.70px;height:8.7px;background:rgb(220,220,220)"></i><i style="left:11.40px;top:8.7px;width:11.70px;height:8.7px;background:rgb(216,216,216)"></i><i style="left:22.80px;top:8.7px;width:11.70px;height:8.7px;background:rgb(199,199,199)"></i><i style="left:34.20px;top:8.7px;width:11.70px;height:8.7px;background:rgb(217,217,217)"></i><i style="left:45.60px;top:8.7px;width:11.70px;height:8.7px;background:rgb(217,217,217)"></i><i style="left:57.00px;top:8.7px;width:11.70px;height:8.7px;background:rgb(213,213,213)"></i><i style="left:68.40px;top:8.7px;width:11.70px;height:8.7px;background:rgb(196,196,196)"></i><i style="left:79.80px;top:8.7px;width:11.70px;height:8.7px;background:rgb(216,216,216)"></i><i style="left:91.20px;top:8.7px;width:11.70px;height:8.7px;background:rgb(203,203,203)"></i><i style="left:102.60px;top:8.7px;width:11.70px;height:8.7px;background:rgb(214,214,214)"></i></div>
<span class="td" style="left:1266px;top:386.10px;background:#fff">00</span>
<span class="td" style="left:1606px;top:386.10px">2025-12-08</span>
<span class="td" style="left:1726px;top:386.10px">收票.</span>
<span class="op nw" style="left:1809px;top:386.10px">操作</span>
<svg class="a" style="left:1840px;top:393.10px" width="10" height="6" viewBox="0 0 10 6" fill="none" stroke="#409eff" stroke-width="1"><path d="M1 0.8L5 4.8L9 0.8"/></svg>
<div class="cb" style="left:271px;top:438.54px"></div>
<span class="td" style="left:326px;top:435.54px">YF251208000159282</span>
<div class="tag nw" style="left:516px;top:436.04px">待审核</div>
<span class="td" style="left:616px;top:435.54px">1251205000148579</span>
<span class="td" style="left:786px;top:435.54px">¥3,019.50</span>
<span class="td" style="left:906px;top:435.54px">¥0.00</span>
<span class="td" style="left:1225px;top:435.54px">2</span>
<div class="mz" style="left:1127.5px;top:433.34px;width:25.5px;height:17.4px"><i style="left:0.00px;top:0.0px;width:13.05px;height:8.7px;background:rgb(236,236,236)"></i><i style="left:12.75px;top:0.0px;width:13.05px;height:8.7px;background:rgb(228,228,228)"></i><i style="left:0.00px;top:8.7px;width:13.05px;height:8.7px;background:rgb(218,218,218)"></i><i style="left:12.75px;top:8.7px;width:13.05px;height:8.7px;background:rgb(198,198,198)"></i></div>
<div class="mz" style="left:1227px;top:433.34px;width:160px;height:17.4px"><i style="left:0.00px;top:0.0px;width:10.97px;height:8.7px;background:rgb(224,224,224)"></i><i style="left:10.67px;top:0.0px;width:10.97px;height:8.7px;background:rgb(223,223,223)"></i><i style="left:21.33px;top:0.0px;width:10.97px;height:8.7px;background:rgb(237,237,237)"></i><i style="left:32.00px;top:0.0px;width:10.97px;height:8.7px;background:rgb(228,228,228)"></i><i style="left:42.67px;top:0.0px;width:10.97px;height:8.7px;background:rgb(222,222,222)"></i><i style="left:53.33px;top:0.0px;width:10.97px;height:8.7px;background:rgb(230,230,230)"></i><i style="left:64.00px;top:0.0px;width:10.97px;height:8.7px;background:rgb(229,229,229)"></i><i style="left:74.67px;top:0.0px;width:10.97px;height:8.7px;background:rgb(222,222,222)"></i><i style="left:85.33px;top:0.0px;width:10.97px;height:8.7px;background:rgb(229,229,229)"></i><i style="left:96.00px;top:0.0px;width:10.97px;height:8.7px;background:rgb(233,233,233)"></i><i style="left:106.67px;top:0.0px;width:10.97px;height:8.7px;background:rgb(225,225,225)"></i><i style="left:117.33px;top:0.0px;width:10.97px;height:8.7px;background:rgb(226,226,226)"></i><i style="left:128.00px;top:0.0px;width:10.97px;height:8.7px;background:rgb(225,225,225)"></i><i style="left:138.67px;top:0.0px;width:10.97px;height:8.7px;background:rgb(225,225,225)"></i><i style="left:149.33px;top:0.0px;width:10.97px;height:8.7px;background:rgb(233,233,233)"></i><i style="left:0.00px;top:8.7px;width:10.97px;height:8.7px;background:rgb(214,214,214)"></i><i style="left:10.67px;top:8.7px;width:10.97px;height:8.7px;background:rgb(204,204,204)"></i><i style="left:21.33px;top:8.7px;width:10.97px;height:8.7px;background:rgb(214,214,214)"></i><i style="left:32.00px;top:8.7px;width:10.97px;height:8.7px;background:rgb(208,208,208)"></i><i style="left:42.67px;top:8.7px;width:10.97px;height:8.7px;background:rgb(210,210,210)"></i><i style="left:53.33px;top:8.7px;width:10.97px;height:8.7px;background:rgb(202,202,202)"></i><i style="left:64.00px;top:8.7px;width:10.97px;height:8.7px;background:rgb(211,211,211)"></i><i style="left:74.67px;top:8.7px;width:10.97px;height:8.7px;background:rgb(219,219,219)"></i><i style="left:85.33px;top:8.7px;width:10.97px;height:8.7px;background:rgb(199,199,199)"></i><i style="left:96.00px;top:8.7px;width:10.97px;height:8.7px;background:rgb(205,205,205)"></i><i style="left:106.67px;top:8.7px;width:10.97px;height:8.7px;background:rgb(198,198,198)"></i><i style="left:117.33px;top:8.7px;width:10.97px;height:8.7px;background:rgb(210,210,210)"></i><i style="left:128.00px;top:8.7px;width:10.97px;height:8.7px;background:rgb(215,215,215)"></i><i style="left:138.67px;top:8.7px;width:10.97px;height:8.7px;background:rgb(210,210,210)"></i><i style="left:149.33px;top:8.7px;width:10.97px;height:8.7px;background:rgb(204,204,204)"></i></div>
<div class="mz" style="left:1437px;top:433.34px;width:114px;height:17.4px"><i style="left:0.00px;top:0.0px;width:11.70px;height:8.7px;background:rgb(223,223,223)"></i><i style="left:11.40px;top:0.0px;width:11.70px;height:8.7px;background:rgb(229,229,229)"></i><i style="left:22.80px;top:0.0px;width:11.70px;height:8.7px;background:rgb(228,228,228)"></i><i style="left:34.20px;top:0.0px;width:11.70px;height:8.7px;background:rgb(224,224,224)"></i><i style="left:45.60px;top:0.0px;width:11.70px;height:8.7px;background:rgb(230,230,230)"></i><i style="left:57.00px;top:0.0px;width:11.70px;height:8.7px;background:rgb(238,238,238)"></i><i style="left:68.40px;top:0.0px;width:11.70px;height:8.7px;background:rgb(234,234,234)"></i><i style="left:79.80px;top:0.0px;width:11.70px;height:8.7px;background:rgb(227,227,227)"></i><i style="left:91.20px;top:0.0px;width:11.70px;height:8.7px;background:rgb(235,235,235)"></i><i style="left:102.60px;top:0.0px;width:11.70px;height:8.7px;background:rgb(237,237,237)"></i><i style="left:0.00px;top:8.7px;width:11.70px;height:8.7px;background:rgb(221,221,221)"></i><i style="left:11.40px;top:8.7px;width:11.70px;height:8.7px;background:rgb(214,214,214)"></i><i style="left:22.80px;top:8.7px;width:11.70px;height:8.7px;background:rgb(222,222,222)"></i><i style="left:34.20px;top:8.7px;width:11.70px;height:8.7px;background:rgb(198,198,198)"></i><i style="left:45.60px;top:8.7px;width:11.70px;height:8.7px;background:rgb(204,204,204)"></i><i style="left:57.00px;top:8.7px;width:11.70px;height:8.7px;background:rgb(212,212,212)"></i><i style="left:68.40px;top:8.7px;width:11.70px;height:8.7px;background:rgb(213,213,213)"></i><i style="left:79.80px;top:8.7px;width:11.70px;height:8.7px;background:rgb(220,220,220)"></i><i style="left:91.20px;top:8.7px;width:11.70px;height:8.7px;background:rgb(217,217,217)"></i><i style="left:102.60px;top:8.7px;width:11.70px;height:8.7px;background:rgb(197,197,197)"></i></div>
<span class="td" style="left:1606px;top:435.54px">2025-12-08</span>
<span class="td" style="left:1726px;top:435.54px">收票.</span>
<span class="op nw" style="left:1809px;top:435.54px">操作</span>
<svg class="a" style="left:1840px;top:442.54px" width="10" height="6" viewBox="0 0 10 6" fill="none" stroke="#409eff" stroke-width="1"><path d="M1 0.8L5 4.8L9 0.8"/></svg>
<div class="cb" style="left:271px;top:487.98px"></div>
<span class="td" style="left:326px;top:484.98px">YF251208000159155</span>
<div class="tag nw" style="left:516px;top:485.48px">待审核</div>
<span class="td" style="left:616px;top:484.98px">1251204000152645</span>
<span class="td" style="left:786px;top:484.98px">¥799.92</span>
<span class="td" style="left:906px;top:484.98px">¥0.00</span>
<div class="mz" style="left:1127.5px;top:486.78px;width:25.5px;height:17.4px"><i style="left:0.00px;top:0.0px;width:13.05px;height:8.7px;background:rgb(222,222,222)"></i><i style="left:12.75px;top:0.0px;width:13.05px;height:8.7px;background:rgb(228,228,228)"></i><i style="left:0.00px;top:8.7px;width:13.05px;height:8.7px;background:rgb(219,219,219)"></i><i style="left:12.75px;top:8.7px;width:13.05px;height:8.7px;background:rgb(220,220,220)"></i></div>
<div class="mz" style="left:1226px;top:486.78px;width:161px;height:17.4px"><i style="left:0.00px;top:0.0px;width:11.03px;height:8.7px;background:rgb(234,234,234)"></i><i style="left:10.73px;top:0.0px;width:11.03px;height:8.7px;background:rgb(224,224,224)"></i><i style="left:21.47px;top:0.0px;width:11.03px;height:8.7px;background:rgb(228,228,228)"></i><i style="left:32.20px;top:0.0px;width:11.03px;height:8.7px;background:rgb(226,226,226)"></i><i style="left:42.93px;top:0.0px;width:11.03px;height:8.7px;background:rgb(235,235,235)"></i><i style="left:53.67px;top:0.0px;width:11.03px;height:8.7px;background:rgb(237,237,237)"></i><i style="left:64.40px;top:0.0px;width:11.03px;height:8.7px;background:rgb(232,232,232)"></i><i style="left:75.13px;top:0.0px;width:11.03px;height:8.7px;background:rgb(225,225,225)"></i><i style="left:85.87px;top:0.0px;width:11.03px;height:8.7px;background:rgb(227,227,227)"></i><i style="left:96.60px;top:0.0px;width:11.03px;height:8.7px;background:rgb(232,232,232)"></i><i style="left:107.33px;top:0.0px;width:11.03px;height:8.7px;background:rgb(235,235,235)"></i><i style="left:118.07px;top:0.0px;width:11.03px;height:8.7px;background:rgb(224,224,224)"></i><i style="left:128.80px;top:0.0px;width:11.03px;height:8.7px;background:rgb(236,236,236)"></i><i style="left:139.53px;top:0.0px;width:11.03px;height:8.7px;background:rgb(224,224,224)"></i><i style="left:150.27px;top:0.0px;width:11.03px;height:8.7px;background:rgb(236,236,236)"></i><i style="left:0.00px;top:8.7px;width:11.03px;height:8.7px;background:rgb(217,217,217)"></i><i style="left:10.73px;top:8.7px;width:11.03px;height:8.7px;background:rgb(212,212,212)"></i><i style="left:21.47px;top:8.7px;width:11.03px;height:8.7px;background:rgb(207,207,207)"></i><i style="left:32.20px;top:8.7px;width:11.03px;height:8.7px;background:rgb(222,222,222)"></i><i style="left:42.93px;top:8.7px;width:11.03px;height:8.7px;background:rgb(222,222,222)"></i><i style="left:53.67px;top:8.7px;width:11.03px;height:8.7px;background:rgb(200,200,200)"></i><i style="left:64.40px;top:8.7px;width:11.03px;height:8.7px;background:rgb(202,202,202)"></i><i style="left:75.13px;top:8.7px;width:11.03px;height:8.7px;background:rgb(203,203,203)"></i><i style="left:85.87px;top:8.7px;width:11.03px;height:8.7px;background:rgb(205,205,205)"></i><i style="left:96.60px;top:8.7px;width:11.03px;height:8.7px;background:rgb(203,203,203)"></i><i style="left:107.33px;top:8.7px;width:11.03px;height:8.7px;background:rgb(202,202,202)"></i><i style="left:118.07px;top:8.7px;width:11.03px;height:8.7px;background:rgb(201,201,201)"></i><i style="left:128.80px;top:8.7px;width:11.03px;height:8.7px;background:rgb(205,205,205)"></i><i style="left:139.53px;top:8.7px;width:11.03px;height:8.7px;background:rgb(210,210,210)"></i><i style="left:150.27px;top:8.7px;width:11.03px;height:8.7px;background:rgb(208,208,208)"></i></div>
<div class="mz" style="left:1437px;top:486.78px;width:114px;height:17.4px"><i style="left:0.00px;top:0.0px;width:11.70px;height:8.7px;background:rgb(226,226,226)"></i><i style="left:11.40px;top:0.0px;width:11.70px;height:8.7px;background:rgb(228,228,228)"></i><i style="left:22.80px;top:0.0px;width:11.70px;height:8.7px;background:rgb(235,235,235)"></i><i style="left:34.20px;top:0.0px;width:11.70px;height:8.7px;background:rgb(238,238,238)"></i><i style="left:45.60px;top:0.0px;width:11.70px;height:8.7px;background:rgb(236,236,236)"></i><i style="left:57.00px;top:0.0px;width:11.70px;height:8.7px;background:rgb(223,223,223)"></i><i style="left:68.40px;top:0.0px;width:11.70px;height:8.7px;background:rgb(229,229,229)"></i><i style="left:79.80px;top:0.0px;width:11.70px;height:8.7px;background:rgb(231,231,231)"></i><i style="left:91.20px;top:0.0px;width:11.70px;height:8.7px;background:rgb(229,229,229)"></i><i style="left:102.60px;top:0.0px;width:11.70px;height:8.7px;background:rgb(229,229,229)"></i><i style="left:0.00px;top:8.7px;width:11.70px;height:8.7px;background:rgb(220,220,220)"></i><i style="left:11.40px;top:8.7px;width:11.70px;height:8.7px;background:rgb(197,197,197)"></i><i style="left:22.80px;top:8.7px;width:11.70px;height:8.7px;background:rgb(197,197,197)"></i><i style="left:34.20px;top:8.7px;width:11.70px;height:8.7px;background:rgb(205,205,205)"></i><i style="left:45.60px;top:8.7px;width:11.70px;height:8.7px;background:rgb(204,204,204)"></i><i style="left:57.00px;top:8.7px;width:11.70px;height:8.7px;background:rgb(217,217,217)"></i><i style="left:68.40px;top:8.7px;width:11.70px;height:8.7px;background:rgb(198,198,198)"></i><i style="left:79.80px;top:8.7px;width:11.70px;height:8.7px;background:rgb(205,205,205)"></i><i style="left:91.20px;top:8.7px;width:11.70px;height:8.7px;background:rgb(208,208,208)"></i><i style="left:102.60px;top:8.7px;width:11.70px;height:8.7px;background:rgb(200,200,200)"></i></div>
<span class="td" style="left:1606px;top:484.98px">2025-12-08</span>
<span class="td" style="left:1726px;top:484.98px">收票.</span>
<span class="op nw" style="left:1809px;top:484.98px">操作</span>
<svg class="a" style="left:1840px;top:491.98px" width="10" height="6" viewBox="0 0 10 6" fill="none" stroke="#409eff" stroke-width="1"><path d="M1 0.8L5 4.8L9 0.8"/></svg>
<div class="cb" style="left:271px;top:537.42px"></div>
<span class="td" style="left:326px;top:534.42px">YF251208000158770</span>
<div class="tag nw" style="left:516px;top:534.92px">待审核</div>
<span class="td" style="left:616px;top:534.42px">1251205000141153</span>
<span class="td" style="left:786px;top:534.42px">¥2,308.88</span>
<span class="td" style="left:906px;top:534.42px">¥0.00</span>
<div class="mz" style="left:1127.5px;top:532.22px;width:25.5px;height:17.4px"><i style="left:0.00px;top:0.0px;width:13.05px;height:8.7px;background:rgb(233,233,233)"></i><i style="left:12.75px;top:0.0px;width:13.05px;height:8.7px;background:rgb(225,225,225)"></i><i style="left:0.00px;top:8.7px;width:13.05px;height:8.7px;background:rgb(196,196,196)"></i><i style="left:12.75px;top:8.7px;width:13.05px;height:8.7px;background:rgb(205,205,205)"></i></div>
<div class="mz" style="left:1225px;top:532.22px;width:156px;height:17.4px"><i style="left:0.00px;top:0.0px;width:11.44px;height:8.7px;background:rgb(235,235,235)"></i><i style="left:11.14px;top:0.0px;width:11.44px;height:8.7px;background:rgb(237,237,237)"></i><i style="left:22.29px;top:0.0px;width:11.44px;height:8.7px;background:rgb(225,225,225)"></i><i style="left:33.43px;top:0.0px;width:11.44px;height:8.7px;background:rgb(237,237,237)"></i><i style="left:44.57px;top:0.0px;width:11.44px;height:8.7px;background:rgb(236,236,236)"></i><i style="left:55.71px;top:0.0px;width:11.44px;height:8.7px;background:rgb(229,229,229)"></i><i style="left:66.86px;top:0.0px;width:11.44px;height:8.7px;background:rgb(238,238,238)"></i><i style="left:78.00px;top:0.0px;width:11.44px;height:8.7px;background:rgb(227,227,227)"></i><i style="left:89.14px;top:0.0px;width:11.44px;height:8.7px;background:rgb(225,225,225)"></i><i style="left:100.29px;top:0.0px;width:11.44px;height:8.7px;background:rgb(228,228,228)"></i><i style="left:111.43px;top:0.0px;width:11.44px;height:8.7px;background:rgb(229,229,229)"></i><i style="left:122.57px;top:0.0px;width:11.44px;height:8.7px;background:rgb(226,226,226)"></i><i style="left:133.71px;top:0.0px;width:11.44px;height:8.7px;background:rgb(228,228,228)"></i><i style="left:144.86px;top:0.0px;width:11.44px;height:8.7px;background:rgb(232,232,232)"></i><i style="left:0.00px;top:8.7px;width:11.44px;height:8.7px;background:rgb(219,219,219)"></i><i style="left:11.14px;top:8.7px;width:11.44px;height:8.7px;background:rgb(196,196,196)"></i><i style="left:22.29px;top:8.7px;width:11.44px;height:8.7px;background:rgb(212,212,212)"></i><i style="left:33.43px;top:8.7px;width:11.44px;height:8.7px;background:rgb(205,205,205)"></i><i style="left:44.57px;top:8.7px;width:11.44px;height:8.7px;background:rgb(206,206,206)"></i><i style="left:55.71px;top:8.7px;width:11.44px;height:8.7px;background:rgb(216,216,216)"></i><i style="left:66.86px;top:8.7px;width:11.44px;height:8.7px;background:rgb(220,220,220)"></i><i style="left:78.00px;top:8.7px;width:11.44px;height:8.7px;background:rgb(204,204,204)"></i><i style="left:89.14px;top:8.7px;width:11.44px;height:8.7px;background:rgb(206,206,206)"></i><i style="left:100.29px;top:8.7px;width:11.44px;height:8.7px;background:rgb(198,198,198)"></i><i style="left:111.43px;top:8.7px;width:11.44px;height:8.7px;background:rgb(199,199,199)"></i><i style="left:122.57px;top:8.7px;width:11.44px;height:8.7px;background:rgb(198,198,198)"></i><i style="left:133.71px;top:8.7px;width:11.44px;height:8.7px;background:rgb(215,215,215)"></i><i style="left:144.86px;top:8.7px;width:11.44px;height:8.7px;background:rgb(205,205,205)"></i></div>
<div class="mz" style="left:1437px;top:532.22px;width:113px;height:17.4px"><i style="left:0.00px;top:0.0px;width:11.60px;height:8.7px;background:rgb(227,227,227)"></i><i style="left:11.30px;top:0.0px;width:11.60px;height:8.7px;background:rgb(234,234,234)"></i><i style="left:22.60px;top:0.0px;width:11.60px;height:8.7px;background:rgb(231,231,231)"></i><i style="left:33.90px;top:0.0px;width:11.60px;height:8.7px;background:rgb(238,238,238)"></i><i style="left:45.20px;top:0.0px;width:11.60px;height:8.7px;background:rgb(227,227,227)"></i><i style="left:56.50px;top:0.0px;width:11.60px;height:8.7px;background:rgb(227,227,227)"></i><i style="left:67.80px;top:0.0px;width:11.60px;height:8.7px;background:rgb(227,227,227)"></i><i style="left:79.10px;top:0.0px;width:11.60px;height:8.7px;background:rgb(237,237,237)"></i><i style="left:90.40px;top:0.0px;width:11.60px;height:8.7px;background:rgb(231,231,231)"></i><i style="left:101.70px;top:0.0px;width:11.60px;height:8.7px;background:rgb(228,228,228)"></i><i style="left:0.00px;top:8.7px;width:11.60px;height:8.7px;background:rgb(218,218,218)"></i><i style="left:11.30px;top:8.7px;width:11.60px;height:8.7px;background:rgb(201,201,201)"></i><i style="left:22.60px;top:8.7px;width:11.60px;height:8.7px;background:rgb(222,222,222)"></i><i style="left:33.90px;top:8.7px;width:11.60px;height:8.7px;background:rgb(197,197,197)"></i><i style="left:45.20px;top:8.7px;width:11.60px;height:8.7px;background:rgb(218,218,218)"></i><i style="left:56.50px;top:8.7px;width:11.60px;height:8.7px;background:rgb(217,217,217)"></i><i style="left:67.80px;top:8.7px;width:11.60px;height:8.7px;background:rgb(210,210,210)"></i><i style="left:79.10px;top:8.7px;width:11.60px;height:8.7px;background:rgb(215,215,215)"></i><i style="left:90.40px;top:8.7px;width:11.60px;height:8.7px;background:rgb(211,211,211)"></i><i style="left:101.70px;top:8.7px;width:11.60px;height:8.7px;background:rgb(203,203,203)"></i></div>
<span class="td" style="left:1606px;top:534.42px">2025-12-08</span>
<span class="td" style="left:1726px;top:534.42px">收票.</span>
<span class="op nw" style="left:1809px;top:534.42px">操作</span>
<svg class="a" style="left:1840px;top:541.42px" width="10" height="6" viewBox="0 0 10 6" fill="none" stroke="#409eff" stroke-width="1"><path d="M1 0.8L5 4.8L9 0.8"/></svg>
<div class="cb" style="left:271px;top:586.86px"></div>
<span class="td" style="left:326px;top:583.86px">YF251208000158761</span>
<div class="tag nw" style="left:516px;top:584.36px">待审核</div>
<span class="td" style="left:616px;top:583.86px">1251205000141432</span>
<span class="td" style="left:786px;top:583.86px">¥975.10</span>
<span class="td" style="left:906px;top:583.86px">¥0.00</span>
<span class="td" style="left:1369px;top:583.86px">11</span>
<span class="td" style="left:1551px;top:583.86px">…</span>
<div class="mz" style="left:1127.5px;top:585.66px;width:25.5px;height:17.4px"><i style="left:0.00px;top:0.0px;width:13.05px;height:8.7px;background:rgb(237,237,237)"></i><i style="left:12.75px;top:0.0px;width:13.05px;height:8.7px;background:rgb(222,222,222)"></i><i style="left:0.00px;top:8.7px;width:13.05px;height:8.7px;background:rgb(213,213,213)"></i><i style="left:12.75px;top:8.7px;width:13.05px;height:8.7px;background:rgb(212,212,212)"></i></div>
<div class="mz" style="left:1225px;top:585.66px;width:143px;height:17.4px"><i style="left:0.00px;top:0.0px;width:11.30px;height:8.7px;background:rgb(222,222,222)"></i><i style="left:11.00px;top:0.0px;width:11.30px;height:8.7px;background:rgb(224,224,224)"></i><i style="left:22.00px;top:0.0px;width:11.30px;height:8.7px;background:rgb(231,231,231)"></i><i style="left:33.00px;top:0.0px;width:11.30px;height:8.7px;background:rgb(229,229,229)"></i><i style="left:44.00px;top:0.0px;width:11.30px;height:8.7px;background:rgb(226,226,226)"></i><i style="left:55.00px;top:0.0px;width:11.30px;height:8.7px;background:rgb(229,229,229)"></i><i style="left:66.00px;top:0.0px;width:11.30px;height:8.7px;background:rgb(229,229,229)"></i><i style="left:77.00px;top:0.0px;width:11.30px;height:8.7px;background:rgb(227,227,227)"></i><i style="left:88.00px;top:0.0px;width:11.30px;height:8.7px;background:rgb(232,232,232)"></i><i style="left:99.00px;top:0.0px;width:11.30px;height:8.7px;background:rgb(230,230,230)"></i><i style="left:110.00px;top:0.0px;width:11.30px;height:8.7px;background:rgb(238,238,238)"></i><i style="left:121.00px;top:0.0px;width:11.30px;height:8.7px;background:rgb(226,226,226)"></i><i style="left:132.00px;top:0.0px;width:11.30px;height:8.7px;background:rgb(238,238,238)"></i><i style="left:0.00px;top:8.7px;width:11.30px;height:8.7px;background:rgb(202,202,202)"></i><i style="left:11.00px;top:8.7px;width:11.30px;height:8.7px;background:rgb(200,200,200)"></i><i style="left:22.00px;top:8.7px;width:11.30px;height:8.7px;background:rgb(219,219,219)"></i><i style="left:33.00px;top:8.7px;width:11.30px;height:8.7px;background:rgb(203,203,203)"></i><i style="left:44.00px;top:8.7px;width:11.30px;height:8.7px;background:rgb(204,204,204)"></i><i style="left:55.00px;top:8.7px;width:11.30px;height:8.7px;background:rgb(217,217,217)"></i><i style="left:66.00px;top:8.7px;width:11.30px;height:8.7px;background:rgb(209,209,209)"></i><i style="left:77.00px;top:8.7px;width:11.30px;height:8.7px;background:rgb(216,216,216)"></i><i style="left:88.00px;top:8.7px;width:11.30px;height:8.7px;background:rgb(217,217,217)"></i><i style="left:99.00px;top:8.7px;width:11.30px;height:8.7px;background:rgb(205,205,205)"></i><i style="left:110.00px;top:8.7px;width:11.30px;height:8.7px;background:rgb(211,211,211)"></i><i style="left:121.00px;top:8.7px;width:11.30px;height:8.7px;background:rgb(209,209,209)"></i><i style="left:132.00px;top:8.7px;width:11.30px;height:8.7px;background:rgb(199,199,199)"></i></div>
<div class="mz" style="left:1437px;top:585.66px;width:113px;height:17.4px"><i style="left:0.00px;top:0.0px;width:11.60px;height:8.7px;background:rgb(235,235,235)"></i><i style="left:11.30px;top:0.0px;width:11.60px;height:8.7px;background:rgb(238,238,238)"></i><i style="left:22.60px;top:0.0px;width:11.60px;height:8.7px;background:rgb(228,228,228)"></i><i style="left:33.90px;top:0.0px;width:11.60px;height:8.7px;background:rgb(230,230,230)"></i><i style="left:45.20px;top:0.0px;width:11.60px;height:8.7px;background:rgb(228,228,228)"></i><i style="left:56.50px;top:0.0px;width:11.60px;height:8.7px;background:rgb(235,235,235)"></i><i style="left:67.80px;top:0.0px;width:11.60px;height:8.7px;background:rgb(234,234,234)"></i><i style="left:79.10px;top:0.0px;width:11.60px;height:8.7px;background:rgb(223,223,223)"></i><i style="left:90.40px;top:0.0px;width:11.60px;height:8.7px;background:rgb(223,223,223)"></i><i style="left:101.70px;top:0.0px;width:11.60px;height:8.7px;background:rgb(233,233,233)"></i><i style="left:0.00px;top:8.7px;width:11.60px;height:8.7px;background:rgb(198,198,198)"></i><i style="left:11.30px;top:8.7px;width:11.60px;height:8.7px;background:rgb(222,222,222)"></i><i style="left:22.60px;top:8.7px;width:11.60px;height:8.7px;background:rgb(217,217,217)"></i><i style="left:33.90px;top:8.7px;width:11.60px;height:8.7px;background:rgb(214,214,214)"></i><i style="left:45.20px;top:8.7px;width:11.60px;height:8.7px;background:rgb(216,216,216)"></i><i style="left:56.50px;top:8.7px;width:11.60px;height:8.7px;background:rgb(215,215,215)"></i><i style="left:67.80px;top:8.7px;width:11.60px;height:8.7px;background:rgb(212,212,212)"></i><i style="left:79.10px;top:8.7px;width:11.60px;height:8.7px;background:rgb(217,217,217)"></i><i style="left:90.40px;top:8.7px;width:11.60px;height:8.7px;background:rgb(204,204,204)"></i><i style="left:101.70px;top:8.7px;width:11.60px;height:8.7px;background:rgb(205,205,205)"></i></div>
<span class="td" style="left:1606px;top:583.86px">2025-12-08</span>
<span class="td" style="left:1726px;top:583.86px">收票.</span>
<span class="op nw" style="left:1809px;top:583.86px">操作</span>
<svg class="a" style="left:1840px;top:590.86px" width="10" height="6" viewBox="0 0 10 6" fill="none" stroke="#409eff" stroke-width="1"><path d="M1 0.8L5 4.8L9 0.8"/></svg>
<div class="cb" style="left:271px;top:636.30px"></div>
<span class="td" style="left:326px;top:633.30px">YF251208000158751</span>
<div class="tag nw" style="left:516px;top:633.80px">待审核</div>
<span class="td" style="left:616px;top:633.30px">1251205000141594</span>
<span class="td" style="left:786px;top:633.30px">¥4,735.36</span>
<span class="td" style="left:906px;top:633.30px">¥0.00</span>
<span class="td" style="left:1225px;top:633.30px">2</span>
<span class="td" style="left:1368px;top:633.30px">59</span>
<span class="td" style="left:1537px;top:633.30px">技…</span>
<div class="mz" style="left:1127.5px;top:631.1px;width:25.5px;height:17.4px"><i style="left:0.00px;top:0.0px;width:13.05px;height:8.7px;background:rgb(229,229,229)"></i><i style="left:12.75px;top:0.0px;width:13.05px;height:8.7px;background:rgb(235,235,235)"></i><i style="left:0.00px;top:8.7px;width:13.05px;height:8.7px;background:rgb(211,211,211)"></i><i style="left:12.75px;top:8.7px;width:13.05px;height:8.7px;background:rgb(220,220,220)"></i></div>
<div class="mz" style="left:1235px;top:631.1px;width:133px;height:17.4px"><i style="left:0.00px;top:0.0px;width:11.38px;height:8.7px;background:rgb(238,238,238)"></i><i style="left:11.08px;top:0.0px;width:11.38px;height:8.7px;background:rgb(229,229,229)"></i><i style="left:22.17px;top:0.0px;width:11.38px;height:8.7px;background:rgb(227,227,227)"></i><i style="left:33.25px;top:0.0px;width:11.38px;height:8.7px;background:rgb(222,222,222)"></i><i style="left:44.33px;top:0.0px;width:11.38px;height:8.7px;background:rgb(233,233,233)"></i><i style="left:55.42px;top:0.0px;width:11.38px;height:8.7px;background:rgb(226,226,226)"></i><i style="left:66.50px;top:0.0px;width:11.38px;height:8.7px;background:rgb(237,237,237)"></i><i style="left:77.58px;top:0.0px;width:11.38px;height:8.7px;background:rgb(224,224,224)"></i><i style="left:88.67px;top:0.0px;width:11.38px;height:8.7px;background:rgb(223,223,223)"></i><i style="left:99.75px;top:0.0px;width:11.38px;height:8.7px;background:rgb(232,232,232)"></i><i style="left:110.83px;top:0.0px;width:11.38px;height:8.7px;background:rgb(233,233,233)"></i><i style="left:121.92px;top:0.0px;width:11.38px;height:8.7px;background:rgb(226,226,226)"></i><i style="left:0.00px;top:8.7px;width:11.38px;height:8.7px;background:rgb(201,201,201)"></i><i style="left:11.08px;top:8.7px;width:11.38px;height:8.7px;background:rgb(198,198,198)"></i><i style="left:22.17px;top:8.7px;width:11.38px;height:8.7px;background:rgb(206,206,206)"></i><i style="left:33.25px;top:8.7px;width:11.38px;height:8.7px;background:rgb(214,214,214)"></i><i style="left:44.33px;top:8.7px;width:11.38px;height:8.7px;background:rgb(210,210,210)"></i><i style="left:55.42px;top:8.7px;width:11.38px;height:8.7px;background:rgb(202,202,202)"></i><i style="left:66.50px;top:8.7px;width:11.38px;height:8.7px;background:rgb(208,208,208)"></i><i style="left:77.58px;top:8.7px;width:11.38px;height:8.7px;background:rgb(208,208,208)"></i><i style="left:88.67px;top:8.7px;width:11.38px;height:8.7px;background:rgb(222,222,222)"></i><i style="left:99.75px;top:8.7px;width:11.38px;height:8.7px;background:rgb(202,202,202)"></i><i style="left:110.83px;top:8.7px;width:11.38px;height:8.7px;background:rgb(213,213,213)"></i><i style="left:121.92px;top:8.7px;width:11.38px;height:8.7px;background:rgb(200,200,200)"></i></div>
<div class="mz" style="left:1437px;top:631.1px;width:113px;height:17.4px"><i style="left:0.00px;top:0.0px;width:11.60px;height:8.7px;background:rgb(238,238,238)"></i><i style="left:11.30px;top:0.0px;width:11.60px;height:8.7px;background:rgb(231,231,231)"></i><i style="left:22.60px;top:0.0px;width:11.60px;height:8.7px;background:rgb(231,231,231)"></i><i style="left:33.90px;top:0.0px;width:11.60px;height:8.7px;background:rgb(238,238,238)"></i><i style="left:45.20px;top:0.0px;width:11.60px;height:8.7px;background:rgb(237,237,237)"></i><i style="left:56.50px;top:0.0px;width:11.60px;height:8.7px;background:rgb(235,235,235)"></i><i style="left:67.80px;top:0.0px;width:11.60px;height:8.7px;background:rgb(230,230,230)"></i><i style="left:79.10px;top:0.0px;width:11.60px;height:8.7px;background:rgb(222,222,222)"></i><i style="left:90.40px;top:0.0px;width:11.60px;height:8.7px;background:rgb(234,234,234)"></i><i style="left:101.70px;top:0.0px;width:11.60px;height:8.7px;background:rgb(228,228,228)"></i><i style="left:0.00px;top:8.7px;width:11.60px;height:8.7px;background:rgb(214,214,214)"></i><i style="left:11.30px;top:8.7px;width:11.60px;height:8.7px;background:rgb(207,207,207)"></i><i style="left:22.60px;top:8.7px;width:11.60px;height:8.7px;background:rgb(199,199,199)"></i><i style="left:33.90px;top:8.7px;width:11.60px;height:8.7px;background:rgb(202,202,202)"></i><i style="left:45.20px;top:8.7px;width:11.60px;height:8.7px;background:rgb(217,217,217)"></i><i style="left:56.50px;top:8.7px;width:11.60px;height:8.7px;background:rgb(220,220,220)"></i><i style="left:67.80px;top:8.7px;width:11.60px;height:8.7px;background:rgb(210,210,210)"></i><i style="left:79.10px;top:8.7px;width:11.60px;height:8.7px;background:rgb(219,219,219)"></i><i style="left:90.40px;top:8.7px;width:11.60px;height:8.7px;background:rgb(205,205,205)"></i><i style="left:101.70px;top:8.7px;width:11.60px;height:8.7px;background:rgb(222,222,222)"></i></div>
<span class="td" style="left:1495px;top:633.30px;background:#fff">信</span>
<span class="td" style="left:1606px;top:633.30px">2025-12-08</span>
<span class="td" style="left:1726px;top:633.30px">收票.</span>
<span class="op nw" style="left:1809px;top:633.30px">操作</span>
<svg class="a" style="left:1840px;top:640.30px" width="10" height="6" viewBox="0 0 10 6" fill="none" stroke="#409eff" stroke-width="1"><path d="M1 0.8L5 4.8L9 0.8"/></svg>
<div class="cb" style="left:271px;top:685.74px"></div>
<span class="td" style="left:326px;top:682.74px">YF251208000158713</span>
<div class="tag nw" style="left:516px;top:683.24px">待审核</div>
<span class="td" style="left:616px;top:682.74px">1251204000152109</span>
<span class="td" style="left:786px;top:682.74px">¥3,859.20</span>
<span class="td" style="left:906px;top:682.74px">¥0.00</span>
<span class="td" style="left:1225px;top:682.74px">2</span>
<span class="td" style="left:1533px;top:682.74px">有…</span>
<div class="mz" style="left:1127.5px;top:684.54px;width:25.5px;height:17.4px"><i style="left:0.00px;top:0.0px;width:13.05px;height:8.7px;background:rgb(226,226,226)"></i><i style="left:12.75px;top:0.0px;width:13.05px;height:8.7px;background:rgb(224,224,224)"></i><i style="left:0.00px;top:8.7px;width:13.05px;height:8.7px;background:rgb(217,217,217)"></i><i style="left:12.75px;top:8.7px;width:13.05px;height:8.7px;background:rgb(208,208,208)"></i></div>
<div class="mz" style="left:1235px;top:684.54px;width:152px;height:17.4px"><i style="left:0.00px;top:0.0px;width:11.16px;height:8.7px;background:rgb(230,230,230)"></i><i style="left:10.86px;top:0.0px;width:11.16px;height:8.7px;background:rgb(238,238,238)"></i><i style="left:21.71px;top:0.0px;width:11.16px;height:8.7px;background:rgb(228,228,228)"></i><i style="left:32.57px;top:0.0px;width:11.16px;height:8.7px;background:rgb(223,223,223)"></i><i style="left:43.43px;top:0.0px;width:11.16px;height:8.7px;background:rgb(230,230,230)"></i><i style="left:54.29px;top:0.0px;width:11.16px;height:8.7px;background:rgb(236,236,236)"></i><i style="left:65.14px;top:0.0px;width:11.16px;height:8.7px;background:rgb(230,230,230)"></i><i style="left:76.00px;top:0.0px;width:11.16px;height:8.7px;background:rgb(236,236,236)"></i><i style="left:86.86px;top:0.0px;width:11.16px;height:8.7px;background:rgb(233,233,233)"></i><i style="left:97.71px;top:0.0px;width:11.16px;height:8.7px;background:rgb(235,235,235)"></i><i style="left:108.57px;top:0.0px;width:11.16px;height:8.7px;background:rgb(227,227,227)"></i><i style="left:119.43px;top:0.0px;width:11.16px;height:8.7px;background:rgb(226,226,226)"></i><i style="left:130.29px;top:0.0px;width:11.16px;height:8.7px;background:rgb(229,229,229)"></i><i style="left:141.14px;top:0.0px;width:11.16px;height:8.7px;background:rgb(231,231,231)"></i><i style="left:0.00px;top:8.7px;width:11.16px;height:8.7px;background:rgb(217,217,217)"></i><i style="left:10.86px;top:8.7px;width:11.16px;height:8.7px;background:rgb(213,213,213)"></i><i style="left:21.71px;top:8.7px;width:11.16px;height:8.7px;background:rgb(200,200,200)"></i><i style="left:32.57px;top:8.7px;width:11.16px;height:8.7px;background:rgb(208,208,208)"></i><i style="left:43.43px;top:8.7px;width:11.16px;height:8.7px;background:rgb(205,205,205)"></i><i style="left:54.29px;top:8.7px;width:11.16px;height:8.7px;background:rgb(208,208,208)"></i><i style="left:65.14px;top:8.7px;width:11.16px;height:8.7px;background:rgb(204,204,204)"></i><i style="left:76.00px;top:8.7px;width:11.16px;height:8.7px;background:rgb(215,215,215)"></i><i style="left:86.86px;top:8.7px;width:11.16px;height:8.7px;background:rgb(202,202,202)"></i><i style="left:97.71px;top:8.7px;width:11.16px;height:8.7px;background:rgb(203,203,203)"></i><i style="left:108.57px;top:8.7px;width:11.16px;height:8.7px;background:rgb(215,215,215)"></i><i style="left:119.43px;top:8.7px;width:11.16px;height:8.7px;background:rgb(213,213,213)"></i><i style="left:130.29px;top:8.7px;width:11.16px;height:8.7px;background:rgb(200,200,200)"></i><i style="left:141.14px;top:8.7px;width:11.16px;height:8.7px;background:rgb(213,213,213)"></i></div>
<div class="mz" style="left:1440px;top:684.54px;width:92px;height:17.4px"><i style="left:0.00px;top:0.0px;width:11.80px;height:8.7px;background:rgb(227,227,227)"></i><i style="left:11.50px;top:0.0px;width:11.80px;height:8.7px;background:rgb(226,226,226)"></i><i style="left:23.00px;top:0.0px;width:11.80px;height:8.7px;background:rgb(234,234,234)"></i><i style="left:34.50px;top:0.0px;width:11.80px;height:8.7px;background:rgb(233,233,233)"></i><i style="left:46.00px;top:0.0px;width:11.80px;height:8.7px;background:rgb(233,233,233)"></i><i style="left:57.50px;top:0.0px;width:11.80px;height:8.7px;background:rgb(238,238,238)"></i><i style="left:69.00px;top:0.0px;width:11.80px;height:8.7px;background:rgb(230,230,230)"></i><i style="left:80.50px;top:0.0px;width:11.80px;height:8.7px;background:rgb(227,227,227)"></i><i style="left:0.00px;top:8.7px;width:11.80px;height:8.7px;background:rgb(209,209,209)"></i><i style="left:11.50px;top:8.7px;width:11.80px;height:8.7px;background:rgb(205,205,205)"></i><i style="left:23.00px;top:8.7px;width:11.80px;height:8.7px;background:rgb(219,219,219)"></i><i style="left:34.50px;top:8.7px;width:11.80px;height:8.7px;background:rgb(209,209,209)"></i><i style="left:46.00px;top:8.7px;width:11.80px;height:8.7px;background:rgb(214,214,214)"></i><i style="left:57.50px;top:8.7px;width:11.80px;height:8.7px;background:rgb(209,209,209)"></i><i style="left:69.00px;top:8.7px;width:11.80px;height:8.7px;background:rgb(206,206,206)"></i><i style="left:80.50px;top:8.7px;width:11.80px;height:8.7px;background:rgb(201,201,201)"></i></div>
<span class="td" style="left:1606px;top:682.74px">2025-12-08</span>
<span class="td" style="left:1726px;top:682.74px">收票.</span>
<span class="op nw" style="left:1809px;top:682.74px">操作</span>
<svg class="a" style="left:1840px;top:689.74px" width="10" height="6" viewBox="0 0 10 6" fill="none" stroke="#409eff" stroke-width="1"><path d="M1 0.8L5 4.8L9 0.8"/></svg>
<div class="cb" style="left:271px;top:735.18px"></div>
<span class="td" style="left:326px;top:732.18px">YF251208000158701</span>
<div class="tag nw" style="left:516px;top:732.68px">待审核</div>
<span class="td" style="left:616px;top:732.18px">1251203000144172</span>
<span class="td" style="left:786px;top:732.18px">¥10,302.74</span>
<span class="td" style="left:906px;top:732.18px">¥0.00</span>
<span class="td" style="left:1225px;top:732.18px">2</span>
<span class="td" style="left:1536px;top:732.18px">技…</span>
<div class="mz" style="left:1127.5px;top:729.98px;width:25.5px;height:17.4px"><i style="left:0.00px;top:0.0px;width:13.05px;height:8.7px;background:rgb(230,230,230)"></i><i style="left:12.75px;top:0.0px;width:13.05px;height:8.7px;background:rgb(229,229,229)"></i><i style="left:0.00px;top:8.7px;width:13.05px;height:8.7px;background:rgb(210,210,210)"></i><i style="left:12.75px;top:8.7px;width:13.05px;height:8.7px;background:rgb(210,210,210)"></i></div>
<div class="mz" style="left:1235px;top:729.98px;width:152px;height:17.4px"><i style="left:0.00px;top:0.0px;width:11.16px;height:8.7px;background:rgb(222,222,222)"></i><i style="left:10.86px;top:0.0px;width:11.16px;height:8.7px;background:rgb(227,227,227)"></i><i style="left:21.71px;top:0.0px;width:11.16px;height:8.7px;background:rgb(231,231,231)"></i><i style="left:32.57px;top:0.0px;width:11.16px;height:8.7px;background:rgb(224,224,224)"></i><i style="left:43.43px;top:0.0px;width:11.16px;height:8.7px;background:rgb(227,227,227)"></i><i style="left:54.29px;top:0.0px;width:11.16px;height:8.7px;background:rgb(224,224,224)"></i><i style="left:65.14px;top:0.0px;width:11.16px;height:8.7px;background:rgb(233,233,233)"></i><i style="left:76.00px;top:0.0px;width:11.16px;height:8.7px;background:rgb(227,227,227)"></i><i style="left:86.86px;top:0.0px;width:11.16px;height:8.7px;background:rgb(229,229,229)"></i><i style="left:97.71px;top:0.0px;width:11.16px;height:8.7px;background:rgb(235,235,235)"></i><i style="left:108.57px;top:0.0px;width:11.16px;height:8.7px;background:rgb(232,232,232)"></i><i style="left:119.43px;top:0.0px;width:11.16px;height:8.7px;background:rgb(227,227,227)"></i><i style="left:130.29px;top:0.0px;width:11.16px;height:8.7px;background:rgb(228,228,228)"></i><i style="left:141.14px;top:0.0px;width:11.16px;height:8.7px;background:rgb(231,231,231)"></i><i style="left:0.00px;top:8.7px;width:11.16px;height:8.7px;background:rgb(198,198,198)"></i><i style="left:10.86px;top:8.7px;width:11.16px;height:8.7px;background:rgb(209,209,209)"></i><i style="left:21.71px;top:8.7px;width:11.16px;height:8.7px;background:rgb(211,211,211)"></i><i style="left:32.57px;top:8.7px;width:11.16px;height:8.7px;background:rgb(206,206,206)"></i><i style="left:43.43px;top:8.7px;width:11.16px;height:8.7px;background:rgb(198,198,198)"></i><i style="left:54.29px;top:8.7px;width:11.16px;height:8.7px;background:rgb(196,196,196)"></i><i style="left:65.14px;top:8.7px;width:11.16px;height:8.7px;background:rgb(200,200,200)"></i><i style="left:76.00px;top:8.7px;width:11.16px;height:8.7px;background:rgb(203,203,203)"></i><i style="left:86.86px;top:8.7px;width:11.16px;height:8.7px;background:rgb(214,214,214)"></i><i style="left:97.71px;top:8.7px;width:11.16px;height:8.7px;background:rgb(210,210,210)"></i><i style="left:108.57px;top:8.7px;width:11.16px;height:8.7px;background:rgb(216,216,216)"></i><i style="left:119.43px;top:8.7px;width:11.16px;height:8.7px;background:rgb(206,206,206)"></i><i style="left:130.29px;top:8.7px;width:11.16px;height:8.7px;background:rgb(216,216,216)"></i><i style="left:141.14px;top:8.7px;width:11.16px;height:8.7px;background:rgb(199,199,199)"></i></div>
<div class="mz" style="left:1437px;top:729.98px;width:100px;height:17.4px"><i style="left:0.00px;top:0.0px;width:11.41px;height:8.7px;background:rgb(224,224,224)"></i><i style="left:11.11px;top:0.0px;width:11.41px;height:8.7px;background:rgb(231,231,231)"></i><i style="left:22.22px;top:0.0px;width:11.41px;height:8.7px;background:rgb(222,222,222)"></i><i style="left:33.33px;top:0.0px;width:11.41px;height:8.7px;background:rgb(226,226,226)"></i><i style="left:44.44px;top:0.0px;width:11.41px;height:8.7px;background:rgb(228,228,228)"></i><i style="left:55.56px;top:0.0px;width:11.41px;height:8.7px;background:rgb(229,229,229)"></i><i style="left:66.67px;top:0.0px;width:11.41px;height:8.7px;background:rgb(228,228,228)"></i><i style="left:77.78px;top:0.0px;width:11.41px;height:8.7px;background:rgb(229,229,229)"></i><i style="left:88.89px;top:0.0px;width:11.41px;height:8.7px;background:rgb(237,237,237)"></i><i style="left:0.00px;top:8.7px;width:11.41px;height:8.7px;background:rgb(197,197,197)"></i><i style="left:11.11px;top:8.7px;width:11.41px;height:8.7px;background:rgb(201,201,201)"></i><i style="left:22.22px;top:8.7px;width:11.41px;height:8.7px;background:rgb(222,222,222)"></i><i style="left:33.33px;top:8.7px;width:11.41px;height:8.7px;background:rgb(221,221,221)"></i><i style="left:44.44px;top:8.7px;width:11.41px;height:8.7px;background:rgb(216,216,216)"></i><i style="left:55.56px;top:8.7px;width:11.41px;height:8.7px;background:rgb(204,204,204)"></i><i style="left:66.67px;top:8.7px;width:11.41px;height:8.7px;background:rgb(209,209,209)"></i><i style="left:77.78px;top:8.7px;width:11.41px;height:8.7px;background:rgb(196,196,196)"></i><i style="left:88.89px;top:8.7px;width:11.41px;height:8.7px;background:rgb(213,213,213)"></i></div>
<span class="td" style="left:1606px;top:732.18px">2025-12-08</span>
<span class="td" style="left:1726px;top:732.18px">收票.</span>
<span class="op nw" style="left:1809px;top:732.18px">操作</span>
<svg class="a" style="left:1840px;top:739.18px" width="10" height="6" viewBox="0 0 10 6" fill="none" stroke="#409eff" stroke-width="1"><path d="M1 0.8L5 4.8L9 0.8"/></svg>
<span class="a nw" style="left:255px;top:808px;font-size:14px;line-height:20px;color:#606266">共 9069 条</span>
<div class="a" style="left:338px;top:798px;width:128px;height:40px;border:1px solid #dcdfe6;border-radius:4px;background:#fff"></div>
<span class="a nw" style="left:353px;top:808px;font-size:14px;line-height:20px;color:#606266">20条/页</span>
<svg class="a" style="left:437px;top:815px" width="11" height="7" viewBox="0 0 11 7" fill="none" stroke="#c0c4cc" stroke-width="1"><path d="M1 1L5.5 5.5L10 1"/></svg>
<div class="pg" style="left:482px;background:#f4f5f7"><svg style="position:absolute;left:17px;top:15px" width="6" height="10" viewBox="0 0 6 10" fill="none" stroke="#c0c4cc" stroke-width="1.1"><path d="M5 1L1 5L5 9"/></svg></div>
<div class="pg" style="left:530px;background:#409eff;color:#fff;font-weight:bold">1</div>
<div class="pg" style="left:578px">2</div>
<div class="pg" style="left:626px">3</div>
<div class="pg" style="left:674px">4</div>
<div class="pg" style="left:770px">454</div>
<div class="pg" style="left:722px"><svg style="position:absolute;left:13px;top:18px" width="14" height="4" viewBox="0 0 14 4" fill="#303133"><circle cx="2" cy="2" r="1.6"/><circle cx="7" cy="2" r="1.6"/><circle cx="12" cy="2" r="1.6"/></svg></div>
<div class="pg" style="left:818px"><svg style="position:absolute;left:17px;top:15px" width="6" height="10" viewBox="0 0 6 10" fill="none" stroke="#303133" stroke-width="1.1"><path d="M1 1L5 5L1 9"/></svg></div>
<span class="a nw" style="left:878px;top:808px;font-size:14px;line-height:20px;color:#606266">前往</span>
<div class="a" style="left:914px;top:798px;width:56px;height:40px;border:1px solid #dcdfe6;border-radius:4px;background:#fff;text-align:center;line-height:38px;font-size:14px;color:#606266">1</div>
<span class="a nw" style="left:986px;top:808px;font-size:14px;line-height:20px;color:#606266">页</span>
<div class="btn nw" style="left:1775px;top:795px;width:108px;height:32px;line-height:32px;background:#409eff;color:#fff;font-size:14px"><svg style="position:absolute;left:17px;top:10px" width="12" height="12" viewBox="0 0 12 12" fill="none" stroke="#fff" stroke-width="1"><circle cx="6" cy="6" r="5"/><circle cx="6" cy="6" r="2"/></svg><span style="position:absolute;left:35px">表格设置</span></div>
<div id="foot">技术支持:<span style="color:#c0702f;margin-left:1.5px">江苏新开软件有限公司</span><span style="color:#3f7ed8;margin-left:10px;letter-spacing:0.2px">https://xinkaisoft.com</span> 联系人:<span style="color:#3f7ed8">吴先生,18862757669</span></div>
</div></body></html>
